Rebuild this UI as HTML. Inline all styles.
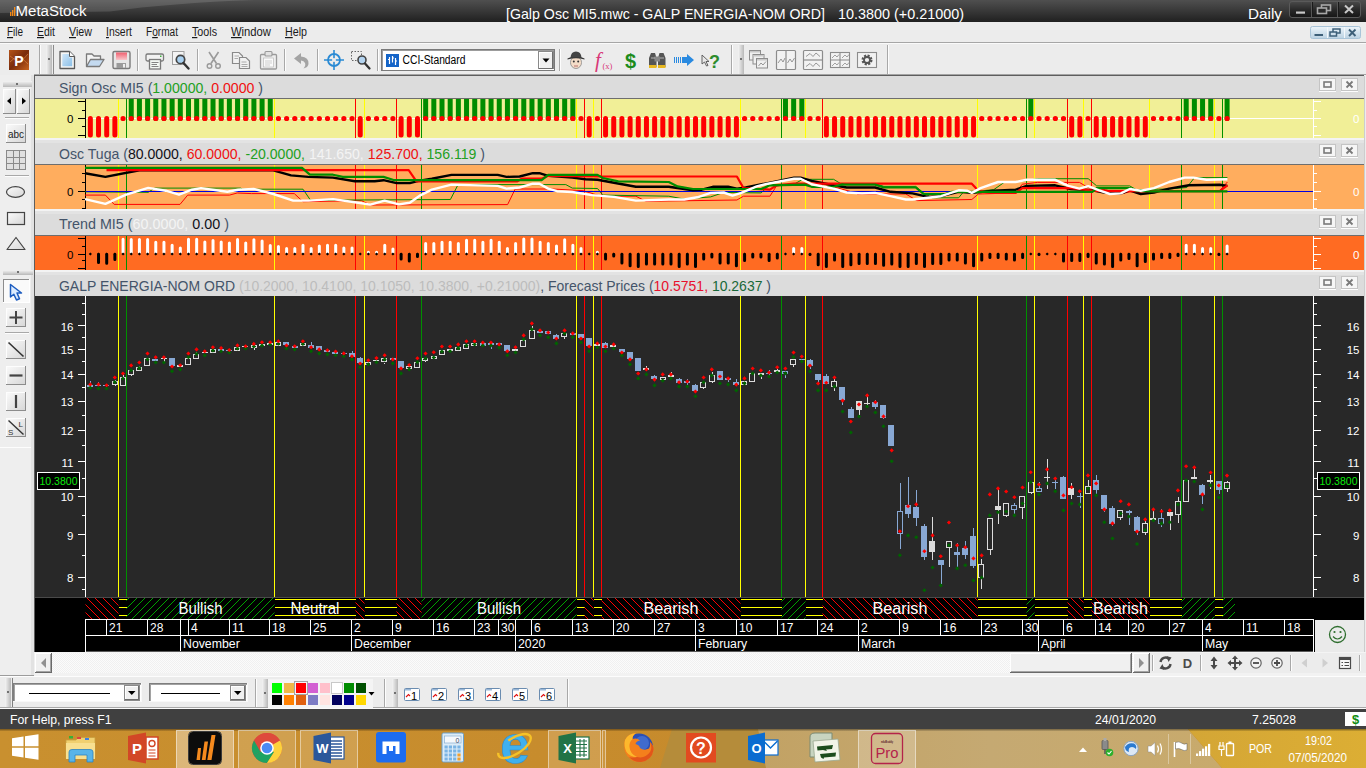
<!DOCTYPE html><html><head><meta charset="utf-8"><title>MetaStock</title><style>html,body{margin:0;padding:0;background:#f0f0f0;overflow:hidden}body{width:1366px;height:768px;font-family:"Liberation Sans",sans-serif}</style></head><body><svg width="1366" height="768" viewBox="0 0 1366 768" style="display:block"><rect width="1366" height="768" fill="#f0f0f0"/><defs><linearGradient id="tb" x1="0" y1="0" x2="0" y2="1"><stop offset="0" stop-color="#4f4f4f"/><stop offset="0.5" stop-color="#383838"/><stop offset="1" stop-color="#202020"/></linearGradient><linearGradient id="tbg" x1="0" y1="0" x2="1" y2="0"><stop offset="0" stop-color="#fff" stop-opacity="0.10"/><stop offset="0.5" stop-color="#000" stop-opacity="0.18"/><stop offset="1" stop-color="#000" stop-opacity="0.25"/></linearGradient><linearGradient id="wb" x1="0" y1="0" x2="0" y2="1"><stop offset="0" stop-color="#4a4a4a"/><stop offset="0.5" stop-color="#2a2a2a"/><stop offset="1" stop-color="#161616"/></linearGradient><linearGradient id="mb" x1="0" y1="0" x2="0" y2="1"><stop offset="0" stop-color="#eef5fa"/><stop offset="0.5" stop-color="#d3e3ee"/><stop offset="1" stop-color="#bcd2e2"/></linearGradient><linearGradient id="grip" x1="0" y1="0" x2="1" y2="0"><stop offset="0" stop-color="#f4f4f4"/><stop offset="1" stop-color="#b8b8b8"/></linearGradient><linearGradient id="gripv" x1="0" y1="0" x2="0" y2="1"><stop offset="0" stop-color="#f4f4f4"/><stop offset="1" stop-color="#b8b8b8"/></linearGradient><linearGradient id="btn" x1="0" y1="0" x2="1" y2="1"><stop offset="0" stop-color="#fbfbfb"/><stop offset="1" stop-color="#d6d6d6"/></linearGradient></defs><rect x="0" y="0" width="1366" height="22" fill="url(#tb)"/><path d="M0 0H255Q170 3 110 11.500L0 13Z" fill="#fff" fill-opacity="0.13"/><rect x="10" y="12" width="1.4" height="4" fill="#f08a1c"/><rect x="12" y="10" width="1.4" height="6" fill="#f08a1c"/><rect x="14" y="7" width="1.4" height="9" fill="#f08a1c"/><text x="15.5" y="15.8" font-family="Liberation Sans, Arial, sans-serif" font-size="15.5" fill="#fff" textLength="71" lengthAdjust="spacingAndGlyphs" xml:space="preserve">MetaStock</text><text x="506" y="19" font-family="Liberation Sans, Arial, sans-serif" font-size="15" fill="#fff" textLength="319" lengthAdjust="spacingAndGlyphs" xml:space="preserve">[Galp Osc MI5.mwc - GALP ENERGIA-NOM ORD]</text><text x="838" y="19" font-family="Liberation Sans, Arial, sans-serif" font-size="15" fill="#fff" textLength="126" lengthAdjust="spacingAndGlyphs" xml:space="preserve">10.3800 (+0.21000)</text><text x="1248" y="19" font-family="Liberation Sans, Arial, sans-serif" font-size="15" fill="#fff" textLength="34" lengthAdjust="spacingAndGlyphs" xml:space="preserve">Daily</text><rect x="1289.5" y="1.5" width="71" height="16" rx="2.5" fill="url(#wb)" stroke="#5a5a5a"/><rect x="1311" y="2" width="1" height="15" fill="#555" shape-rendering="crispEdges"/><rect x="1337" y="2" width="1" height="15" fill="#555" shape-rendering="crispEdges"/><rect x="1312" y="2" width="1" height="15" fill="#1a1a1a" shape-rendering="crispEdges"/><rect x="1338" y="2" width="1" height="15" fill="#1a1a1a" shape-rendering="crispEdges"/><rect x="1296" y="11.5" width="9" height="2.2" fill="#c8c8c8"/><rect x="1321.5" y="5" width="9" height="5.5" fill="none" stroke="#a8a8a8" stroke-width="1.6"/><rect x="1317.5" y="8" width="9" height="5.5" fill="#2a2a2a" stroke="#a8a8a8" stroke-width="1.6"/><path d="M1345 5.5L1353 13M1353 5.5L1345 13" stroke="#c8c8c8" stroke-width="2" fill="none"/><rect x="0" y="22" width="1366" height="21" fill="#ececec"/><rect x="0" y="42" width="1366" height="1" fill="#a6a6a6" shape-rendering="crispEdges"/><rect x="0" y="43" width="1366" height="1" fill="#fafafa" shape-rendering="crispEdges"/><text x="7" y="36" font-family="Liberation Sans, Arial, sans-serif" font-size="12" fill="#1a1a1a" textLength="16" lengthAdjust="spacingAndGlyphs" xml:space="preserve"><tspan text-decoration="underline">F</tspan>ile</text><text x="37" y="36" font-family="Liberation Sans, Arial, sans-serif" font-size="12" fill="#1a1a1a" textLength="18" lengthAdjust="spacingAndGlyphs" xml:space="preserve"><tspan text-decoration="underline">E</tspan>dit</text><text x="69" y="36" font-family="Liberation Sans, Arial, sans-serif" font-size="12" fill="#1a1a1a" textLength="23" lengthAdjust="spacingAndGlyphs" xml:space="preserve"><tspan text-decoration="underline">V</tspan>iew</text><text x="106" y="36" font-family="Liberation Sans, Arial, sans-serif" font-size="12" fill="#1a1a1a" textLength="26" lengthAdjust="spacingAndGlyphs" xml:space="preserve"><tspan text-decoration="underline">I</tspan>nsert</text><text x="146" y="36" font-family="Liberation Sans, Arial, sans-serif" font-size="12" fill="#1a1a1a" textLength="32" lengthAdjust="spacingAndGlyphs" xml:space="preserve">F<tspan text-decoration="underline">o</tspan>rmat</text><text x="192" y="36" font-family="Liberation Sans, Arial, sans-serif" font-size="12" fill="#1a1a1a" textLength="25" lengthAdjust="spacingAndGlyphs" xml:space="preserve"><tspan text-decoration="underline">T</tspan>ools</text><text x="231" y="36" font-family="Liberation Sans, Arial, sans-serif" font-size="12" fill="#1a1a1a" textLength="40" lengthAdjust="spacingAndGlyphs" xml:space="preserve"><tspan text-decoration="underline">W</tspan>indow</text><text x="285" y="36" font-family="Liberation Sans, Arial, sans-serif" font-size="12" fill="#1a1a1a" textLength="22" lengthAdjust="spacingAndGlyphs" xml:space="preserve"><tspan text-decoration="underline">H</tspan>elp</text><rect x="1310.5" y="26.5" width="50" height="12" rx="2" fill="url(#mb)" stroke="#a9c4d8"/><rect x="1326.5" y="27" width="1" height="11" fill="#f4f8fb" shape-rendering="crispEdges"/><rect x="1343.5" y="27" width="1" height="11" fill="#f4f8fb" shape-rendering="crispEdges"/><rect x="1314.5" y="34" width="8.5" height="2" fill="#3d5f78"/><rect x="1333" y="29" width="7" height="4" fill="none" stroke="#3d5f78" stroke-width="1.5"/><rect x="1330" y="32" width="6.5" height="4" fill="#cfe0ec" stroke="#3d5f78" stroke-width="1.5"/><path d="M1349 29.5L1355.5 36M1355.5 29.5L1349 36" stroke="#3d5f78" stroke-width="1.9" fill="none"/><rect x="0" y="44" width="1366" height="31" fill="#ececec"/><rect x="34" y="74" width="1332" height="1" fill="#a4a4a4" shape-rendering="crispEdges"/><defs><linearGradient id="pic" x1="0" y1="0" x2="1" y2="1"><stop offset="0" stop-color="#b4541a"/><stop offset="0.5" stop-color="#7a2c0c"/><stop offset="1" stop-color="#c8641c"/></linearGradient><linearGradient id="pg" x1="0" y1="0" x2="1" y2="1"><stop offset="0" stop-color="#cfe6f8"/><stop offset="1" stop-color="#8cc0e8"/></linearGradient><linearGradient id="sv" x1="0" y1="0" x2="0" y2="1"><stop offset="0" stop-color="#f06070"/><stop offset="1" stop-color="#f8c8cc"/></linearGradient></defs><rect x="9" y="50" width="20" height="20" fill="url(#pic)"/><path d="M10 62Q18 52 28 64M10 56Q20 66 28 54" stroke="#e09050" stroke-width="0.8" fill="none" opacity="0.7"/><text x="19" y="66" font-family="Liberation Sans, Arial, sans-serif" font-size="14" fill="#fff" text-anchor="middle" font-weight="bold" xml:space="preserve">P</text><rect x="39" y="45" width="1" height="29" fill="#a8a8a8" shape-rendering="crispEdges"/><rect x="40" y="45" width="1" height="29" fill="#fdfdfd" shape-rendering="crispEdges"/><rect x="46" y="45" width="6" height="29" fill="url(#grip)"/><rect x="48" y="58" width="2" height="2" fill="#707070" shape-rendering="crispEdges"/><rect x="53" y="45" width="1" height="29" fill="#8a8a8a" shape-rendering="crispEdges"/><path d="M60 51.500H69.500L74.500 56.500V68.500H60Z" fill="#f6f6f4" stroke="#5a5a5a" stroke-width="1.300" stroke-linejoin="round"/><path d="M62.300 54H69V57.500H72.200V66.200H62.300Z" fill="url(#pg)"/><path d="M69.500 51.500V56.500H74.500" fill="#fcfcfc" stroke="#5a5a5a" stroke-width="1"/><path d="M86.500 66.500V54H92L94 56H100.500V59" fill="#f4f4f4" stroke="#7a7a7a" stroke-width="1.3" stroke-linejoin="round"/><path d="M86.500 66.500L90.500 59.500H104L99.500 66.500Z" fill="#c4daf0" stroke="#7a7a7a" stroke-width="1.3" stroke-linejoin="round"/><rect x="113" y="51.500" width="17" height="17" rx="1.5" fill="#e6e6e6" stroke="#7a7a7a" stroke-width="1.4"/><rect x="116" y="52.500" width="11" height="7.500" fill="url(#sv)"/><rect x="116.500" y="63" width="9.500" height="5" fill="#9a9a9a"/><rect x="123" y="64" width="2" height="3.500" fill="#eee"/><rect x="137" y="49" width="1" height="22" fill="#a8a8a8" shape-rendering="crispEdges"/><rect x="138" y="49" width="1" height="22" fill="#fdfdfd" shape-rendering="crispEdges"/><rect x="146" y="54" width="17.500" height="7" rx="1.500" fill="#f2f2f2" stroke="#7a7a7a" stroke-width="1.300"/><rect x="149.500" y="59.500" width="11" height="9.500" fill="#f4faf4" stroke="#7a7a7a" stroke-width="1.300"/><path d="M151.500 62.500H158.500M151.500 64.500H157M151.500 66.500H158.500" stroke="#777" stroke-width="0.9"/><rect x="160" y="55.500" width="1.500" height="1.500" fill="#40b040"/><rect x="172.500" y="51.500" width="11.500" height="13" fill="#f4f4f4" stroke="#a0a0a0" stroke-width="1"/><circle cx="180.500" cy="59.500" r="4.200" fill="#a8d0f0" stroke="#444" stroke-width="1.700"/><path d="M183.500 63L188.500 68.500" stroke="#333" stroke-width="2.400" stroke-linecap="round"/><rect x="197" y="49" width="1" height="22" fill="#a8a8a8" shape-rendering="crispEdges"/><rect x="198" y="49" width="1" height="22" fill="#fdfdfd" shape-rendering="crispEdges"/><path d="M209 52L216.500 63.500M218.500 52L211 63.500" stroke="#9a9a9a" stroke-width="1.600" fill="none"/><circle cx="209.500" cy="66" r="2.300" fill="none" stroke="#9a9a9a" stroke-width="1.400"/><circle cx="218" cy="66" r="2.300" fill="none" stroke="#9a9a9a" stroke-width="1.400"/><path d="M232.500 52.500H239L242.500 56V63.500H232.500Z" fill="#f2f2f2" stroke="#8a8a8a" stroke-width="1.200"/><path d="M239.500 57.500H246L249.500 61V68.500H239.500Z" fill="#f2f2f2" stroke="#8a8a8a" stroke-width="1.200"/><path d="M234.500 56H239M234.500 58.500H238M241.500 62H246.500M241.500 64.500H247.500M241.500 66.500H247.500" stroke="#999" stroke-width="0.8"/><rect x="260.500" y="54.500" width="16" height="14.500" rx="1" fill="#eeeeee" stroke="#9a9a9a" stroke-width="1.300"/><rect x="265" y="51.500" width="7" height="4.500" rx="1" fill="#e2e2e2" stroke="#9a9a9a" stroke-width="1.100"/><rect x="263.500" y="58" width="10" height="9" fill="#fafafa" stroke="#bbb" stroke-width="0.700"/><path d="M265 61H272M265 63H272M265 65H270" stroke="#bbb" stroke-width="0.700"/><rect x="284" y="49" width="1" height="22" fill="#a8a8a8" shape-rendering="crispEdges"/><rect x="285" y="49" width="1" height="22" fill="#fdfdfd" shape-rendering="crispEdges"/><path d="M294 58.500L301 53V56.500Q309 57 308.500 64Q308 67.500 303.500 68.500Q306 65.500 305 63Q304 60.500 301 60.500V64Z" fill="#a4a4a4"/><rect x="317" y="49" width="1" height="22" fill="#a8a8a8" shape-rendering="crispEdges"/><rect x="318" y="49" width="1" height="22" fill="#fdfdfd" shape-rendering="crispEdges"/><circle cx="334" cy="60" r="6" fill="none" stroke="#2a8ad4" stroke-width="1.800"/><path d="M324 60H344M334 50V70" stroke="#2a8ad4" stroke-width="1.600"/><circle cx="334" cy="60" r="2" fill="#ececec"/><rect x="351.500" y="51.500" width="10" height="9" fill="none" stroke="#666" stroke-width="1" stroke-dasharray="1.500 1.500"/><circle cx="362" cy="60" r="4" fill="#b4d4f0" stroke="#444" stroke-width="1.600"/><path d="M365 63.500L369.500 68.500" stroke="#333" stroke-width="2.300" stroke-linecap="round"/><rect x="377" y="49" width="1" height="22" fill="#a8a8a8" shape-rendering="crispEdges"/><rect x="378" y="49" width="1" height="22" fill="#fdfdfd" shape-rendering="crispEdges"/><rect x="381.500" y="49.500" width="173" height="21" fill="#fff" stroke="#7a7a7a" shape-rendering="crispEdges"/><rect x="382" y="50" width="172" height="1" fill="#9c9c9c" shape-rendering="crispEdges"/><rect x="382" y="50" width="1" height="20" fill="#9c9c9c" shape-rendering="crispEdges"/><rect x="538.500" y="51.500" width="15" height="17" fill="#f0f0f0" stroke="#8a8a8a" shape-rendering="crispEdges"/><rect x="539" y="52" width="14" height="1" fill="#fff" shape-rendering="crispEdges"/><rect x="539" y="52" width="1" height="16" fill="#fff" shape-rendering="crispEdges"/><rect x="552" y="52" width="1" height="16" fill="#6e6e6e" shape-rendering="crispEdges"/><rect x="539" y="68" width="14" height="1" fill="#6e6e6e" shape-rendering="crispEdges"/><path d="M542.500 58.500H549.500L546 62.500Z" fill="#000"/><rect x="386" y="54" width="13" height="13" fill="#1464c8"/><path d="M389.500 57V64M392.500 56V62.500M395.500 58V65M389.500 59.500H388M392.500 58H394M395.500 61H397" stroke="#fff" stroke-width="1.200"/><text x="402.5" y="64" font-family="Liberation Sans, Arial, sans-serif" font-size="12" fill="#000" textLength="63" lengthAdjust="spacingAndGlyphs" xml:space="preserve">CCI-Standard</text><rect x="559" y="49" width="1" height="22" fill="#a8a8a8" shape-rendering="crispEdges"/><rect x="560" y="49" width="1" height="22" fill="#fdfdfd" shape-rendering="crispEdges"/><ellipse cx="576" cy="62.500" rx="5.500" ry="6" fill="#f4ddc8" stroke="#888" stroke-width="0.8"/><path d="M567.500 58.500Q576 54 584.500 58.500L584.500 59.500Q576 57 567.500 59.500Z" fill="#333"/><path d="M570.500 57.500Q571 51.500 576 51.500Q581 51.500 581.500 57.500Z" fill="#444"/><circle cx="573.800" cy="61.500" r="1" fill="#333"/><circle cx="578.200" cy="61.500" r="1" fill="#333"/><path d="M574 66H578" stroke="#a55" stroke-width="0.8"/><text x="595" y="67" font-family="Liberation Serif, serif" font-style="italic" font-size="21" fill="#d83878">f</text><text x="602.500" y="69" font-family="Liberation Serif, serif" font-size="8.500" fill="#d83878">(x)</text><text x="630.5" y="68" font-family="Liberation Sans, Arial, sans-serif" font-size="20" fill="#1c8c1c" text-anchor="middle" font-weight="bold" xml:space="preserve">$</text><path d="M649 67V58L651 53H655L656.500 58V67ZM658 67V58L659.500 53H663.500L665.500 58V67Z" fill="#555"/><rect x="654.500" y="56.500" width="5.500" height="5" fill="#888"/><rect x="649" y="65" width="7.500" height="3" fill="#e8b820"/><rect x="658" y="65" width="7.500" height="3" fill="#e8b820"/><path d="M651 58H655M660 58H664" stroke="#ccc" stroke-width="0.8"/><path d="M674.500 57V63M676.500 57V63M678.500 57V63M680.500 57V63" stroke="#2a8ae0" stroke-width="1"/><path d="M682 57H687V54L694 60L687 66V63H682Z" fill="#2a8ae0"/><path d="M702 55L702 64L704.500 62L706.500 66L708 65.500L706 61.500L709 61.500Z" fill="#e8e8e8" stroke="#555" stroke-width="0.9"/><text x="714.5" y="68" font-family="Liberation Sans, Arial, sans-serif" font-size="18" fill="#2c8c2c" text-anchor="middle" font-weight="bold" xml:space="preserve">?</text><rect x="731" y="45" width="1" height="29" fill="#a8a8a8" shape-rendering="crispEdges"/><rect x="732" y="45" width="1" height="29" fill="#fdfdfd" shape-rendering="crispEdges"/><rect x="738" y="45" width="6" height="29" fill="url(#grip)"/><rect x="740" y="58" width="2" height="2" fill="#707070" shape-rendering="crispEdges"/><rect x="749.5" y="50.5" width="11" height="9.500" fill="#f0f0f0" stroke="#8c8c8c" stroke-width="1"/><rect x="750.0" y="51.0" width="10" height="1.500" fill="#c8c8c8"/><rect x="753" y="54.5" width="11" height="9.500" fill="#f0f0f0" stroke="#8c8c8c" stroke-width="1"/><rect x="753.5" y="55.0" width="10" height="1.500" fill="#c8c8c8"/><rect x="756.5" y="58.5" width="11" height="9.500" fill="#f0f0f0" stroke="#8c8c8c" stroke-width="1"/><rect x="757.0" y="59.0" width="10" height="1.500" fill="#c8c8c8"/><path d="M758.500 66L761 63L763 65L766 61.500" stroke="#8c8c8c" stroke-width="0.9" fill="none"/><rect x="776.500" y="50.500" width="19" height="19" rx="1" fill="#f2f2f2" stroke="#8c8c8c" stroke-width="1.200"/><path d="M786 50.500V69.500" stroke="#8c8c8c" stroke-width="1.200"/><path d="M778 63L781 59L783 62L785 58M787.500 63L790 59L792 62L794.500 58" stroke="#8c8c8c" stroke-width="0.9" fill="none"/><rect x="803.500" y="50.500" width="19" height="19" rx="1" fill="#f2f2f2" stroke="#8c8c8c" stroke-width="1.200"/><path d="M803.500 60H822.500" stroke="#8c8c8c" stroke-width="1.200"/><path d="M806 56.500L810 53.500L813 56.500L816 53L820 56.500M806 66.500L810 63.500L813 66.500L816 63L820 66.500" stroke="#8c8c8c" stroke-width="0.9" fill="none"/><rect x="830.500" y="52.500" width="19" height="15" fill="#f2f2f2" stroke="#8c8c8c" stroke-width="1.100"/><path d="M840 52.500V67.500M830.500 60H849.500" stroke="#8c8c8c" stroke-width="1.100"/><path d="M832 58L835 55L837 57L839 54.500M842 58L845 55L847 57L849 54.500M832 66L835 63L837 65L839 62.500M842 66L845 63L847 65L849 62.500" stroke="#8c8c8c" stroke-width="0.8" fill="none"/><rect x="857.500" y="52.500" width="19" height="15" fill="#f2f2f2" stroke="#8c8c8c" stroke-width="1.100"/><circle cx="867" cy="60" r="4.200" fill="none" stroke="#555" stroke-width="2.600" stroke-dasharray="2 1.300"/><circle cx="867" cy="60" r="3" fill="none" stroke="#555" stroke-width="1.800"/><rect x="887" y="45" width="1" height="29" fill="#a8a8a8" shape-rendering="crispEdges"/><rect x="888" y="45" width="1" height="29" fill="#fdfdfd" shape-rendering="crispEdges"/><rect x="0" y="75" width="34" height="600" fill="#eeeeee"/><rect x="31" y="75" width="3" height="600" fill="#e2e2e2"/><rect x="0" y="675" width="34" height="1" fill="#9c9c9c" shape-rendering="crispEdges"/><rect x="3" y="81" width="29" height="6" fill="url(#gripv)"/><rect x="16" y="83" width="2" height="2" fill="#707070" shape-rendering="crispEdges"/><rect x="3" y="89" width="13" height="25" fill="url(#btn)"/><rect x="3" y="89" width="13" height="1" fill="#fdfdfd" shape-rendering="crispEdges"/><rect x="3" y="89" width="1" height="25" fill="#fdfdfd" shape-rendering="crispEdges"/><rect x="15" y="89" width="1" height="25" fill="#8c8c8c" shape-rendering="crispEdges"/><rect x="3" y="113" width="13" height="1" fill="#8c8c8c" shape-rendering="crispEdges"/><rect x="17" y="89" width="13" height="25" fill="url(#btn)"/><rect x="17" y="89" width="13" height="1" fill="#fdfdfd" shape-rendering="crispEdges"/><rect x="17" y="89" width="1" height="25" fill="#fdfdfd" shape-rendering="crispEdges"/><rect x="29" y="89" width="1" height="25" fill="#8c8c8c" shape-rendering="crispEdges"/><rect x="17" y="113" width="13" height="1" fill="#8c8c8c" shape-rendering="crispEdges"/><path d="M11 97.500V104.500L7 101Z" fill="#000"/><path d="M22 97.500V104.500L26 101Z" fill="#000"/><rect x="5" y="117" width="24" height="1" fill="#a8a8a8" shape-rendering="crispEdges"/><rect x="5" y="118" width="24" height="1" fill="#fdfdfd" shape-rendering="crispEdges"/><rect x="6" y="124" width="20" height="19" fill="url(#btn)"/><rect x="6" y="124" width="20" height="1" fill="#fdfdfd" shape-rendering="crispEdges"/><rect x="6" y="124" width="1" height="19" fill="#fdfdfd" shape-rendering="crispEdges"/><rect x="25" y="124" width="1" height="19" fill="#8c8c8c" shape-rendering="crispEdges"/><rect x="6" y="142" width="20" height="1" fill="#8c8c8c" shape-rendering="crispEdges"/><text x="16" y="138" font-family="Liberation Sans, Arial, sans-serif" font-size="11.5" fill="#222" text-anchor="middle" textLength="16" lengthAdjust="spacingAndGlyphs" xml:space="preserve">abc</text><rect x="6" y="150" width="20" height="20" fill="#e0e0e0"/><path d="M6.500 150.500H25.500V169.500H6.500ZM13 150.500V169.500M19.500 150.500V169.500M6.500 157H25.500M6.500 163.500H25.500" stroke="#8a8a8a" stroke-width="1" fill="none" shape-rendering="crispEdges"/><rect x="5" y="175" width="24" height="1" fill="#a8a8a8" shape-rendering="crispEdges"/><rect x="5" y="176" width="24" height="1" fill="#fdfdfd" shape-rendering="crispEdges"/><ellipse cx="15.500" cy="192" rx="9" ry="5.300" fill="url(#btn)" stroke="#444" stroke-width="1.200"/><rect x="7.500" y="212.500" width="17" height="12" fill="url(#btn)" stroke="#444" stroke-width="1.200"/><path d="M16 237.500L25 249.500H7Z" fill="url(#btn)" stroke="#444" stroke-width="1.200" stroke-linejoin="round"/><rect x="3" y="270" width="30" height="5" fill="url(#gripv)"/><rect x="17" y="271" width="2" height="2" fill="#707070" shape-rendering="crispEdges"/><rect x="3" y="279" width="27" height="24" fill="#fafafa"/><rect x="3" y="279" width="27" height="1" fill="#8c8c8c" shape-rendering="crispEdges"/><rect x="3" y="279" width="1" height="24" fill="#8c8c8c" shape-rendering="crispEdges"/><rect x="29" y="279" width="1" height="24" fill="#fff" shape-rendering="crispEdges"/><rect x="3" y="302" width="27" height="1" fill="#fff" shape-rendering="crispEdges"/><path d="M10.500 284.500L10.500 297L13.800 294.200L16.500 300L19.500 298.700L17 293L21.500 293Z" fill="#dcecff" stroke="#1c5cc0" stroke-width="1.500" stroke-linejoin="round"/><rect x="6" y="308" width="20" height="19" fill="url(#btn)"/><rect x="6" y="308" width="20" height="1" fill="#fdfdfd" shape-rendering="crispEdges"/><rect x="6" y="308" width="1" height="19" fill="#fdfdfd" shape-rendering="crispEdges"/><rect x="25" y="308" width="1" height="19" fill="#8c8c8c" shape-rendering="crispEdges"/><rect x="6" y="326" width="20" height="1" fill="#8c8c8c" shape-rendering="crispEdges"/><path d="M9.500 317.500H22.500M16 311V324" stroke="#444" stroke-width="2"/><rect x="5" y="332" width="24" height="1" fill="#a8a8a8" shape-rendering="crispEdges"/><rect x="5" y="333" width="24" height="1" fill="#fdfdfd" shape-rendering="crispEdges"/><rect x="6" y="340" width="20" height="19" fill="url(#btn)"/><rect x="6" y="340" width="20" height="1" fill="#fdfdfd" shape-rendering="crispEdges"/><rect x="6" y="340" width="1" height="19" fill="#fdfdfd" shape-rendering="crispEdges"/><rect x="25" y="340" width="1" height="19" fill="#8c8c8c" shape-rendering="crispEdges"/><rect x="6" y="358" width="20" height="1" fill="#8c8c8c" shape-rendering="crispEdges"/><path d="M8.500 342.500L23.500 356.500" stroke="#333" stroke-width="1.600"/><rect x="6" y="366" width="20" height="19" fill="url(#btn)"/><rect x="6" y="366" width="20" height="1" fill="#fdfdfd" shape-rendering="crispEdges"/><rect x="6" y="366" width="1" height="19" fill="#fdfdfd" shape-rendering="crispEdges"/><rect x="25" y="366" width="1" height="19" fill="#8c8c8c" shape-rendering="crispEdges"/><rect x="6" y="384" width="20" height="1" fill="#8c8c8c" shape-rendering="crispEdges"/><path d="M9.500 375.500H22.500" stroke="#444" stroke-width="2.200"/><rect x="6" y="392" width="20" height="19" fill="url(#btn)"/><rect x="6" y="392" width="20" height="1" fill="#fdfdfd" shape-rendering="crispEdges"/><rect x="6" y="392" width="1" height="19" fill="#fdfdfd" shape-rendering="crispEdges"/><rect x="25" y="392" width="1" height="19" fill="#8c8c8c" shape-rendering="crispEdges"/><rect x="6" y="410" width="20" height="1" fill="#8c8c8c" shape-rendering="crispEdges"/><path d="M16 395V408" stroke="#444" stroke-width="2.200"/><rect x="6" y="418" width="20" height="19" fill="url(#btn)"/><rect x="6" y="418" width="20" height="1" fill="#fdfdfd" shape-rendering="crispEdges"/><rect x="6" y="418" width="1" height="19" fill="#fdfdfd" shape-rendering="crispEdges"/><rect x="25" y="418" width="1" height="19" fill="#8c8c8c" shape-rendering="crispEdges"/><rect x="6" y="436" width="20" height="1" fill="#8c8c8c" shape-rendering="crispEdges"/><path d="M8.500 420.500L23.500 434.500" stroke="#333" stroke-width="1.400"/><text x="8" y="435" font-family="Liberation Sans, Arial, sans-serif" font-size="8" fill="#333" xml:space="preserve">S</text><text x="18.5" y="427" font-family="Liberation Sans, Arial, sans-serif" font-size="8" fill="#333" xml:space="preserve">L</text><rect x="0" y="447" width="31" height="1" fill="#fdfdfd" shape-rendering="crispEdges"/><defs>
<pattern id="hr" width="8" height="8" patternUnits="userSpaceOnUse" x="0" y="599"><path d="M-1 -1L9 9M-1 -9L17 9M-9 -1L9 17" stroke="#ff0000" stroke-width="1" shape-rendering="crispEdges"/></pattern>
<pattern id="hg" width="8" height="8" patternUnits="userSpaceOnUse" x="0" y="599"><path d="M-1 9L9 -1M-1 17L17 -1M-9 9L9 -9" stroke="#00a000" stroke-width="1" shape-rendering="crispEdges"/></pattern>
</defs><rect x="34" y="75" width="1330" height="578" fill="#5e5e5e"/><rect x="1364" y="76" width="1" height="577" fill="#cdcdcd"/><rect x="1365" y="76" width="1" height="577" fill="#ececec"/><rect x="35" y="76" width="1329" height="576" fill="#dcdcdc"/><rect x="35" y="99" width="1329" height="39" fill="#f1ef97"/><rect x="35" y="138" width="1329" height="2" fill="#f3f3f3"/><rect x="35" y="140" width="1329" height="3" fill="#e3e3e3"/><g shape-rendering="crispEdges"><rect x="85" y="99" width="1" height="39" fill="#000"/><rect x="78" y="101" width="7" height="1" fill="#000"/><rect x="78" y="118" width="7" height="1" fill="#000"/><rect x="78" y="135" width="7" height="1" fill="#000"/><rect x="82" y="110" width="3" height="1" fill="#000"/><rect x="82" y="126" width="3" height="1" fill="#000"/></g><text x="67" y="123" font-family="Liberation Sans, Arial, sans-serif" font-size="11.5" fill="#000">0</text><rect x="86" y="118" width="1228" height="1" fill="#fff" shape-rendering="crispEdges"/><g shape-rendering="crispEdges" stroke-width="1"><line x1="118.5" y1="99" x2="118.5" y2="138" stroke="#ffff00"/><line x1="126.5" y1="99" x2="126.5" y2="138" stroke="#009000"/><line x1="274.5" y1="99" x2="274.5" y2="138" stroke="#ffff00"/><line x1="355.5" y1="99" x2="355.5" y2="138" stroke="#ff0000"/><line x1="364.5" y1="99" x2="364.5" y2="138" stroke="#ffff00"/><line x1="396.5" y1="99" x2="396.5" y2="138" stroke="#ff0000"/><line x1="421.5" y1="99" x2="421.5" y2="138" stroke="#009000"/><line x1="576.5" y1="99" x2="576.5" y2="138" stroke="#ffff00"/><line x1="584.5" y1="99" x2="584.5" y2="138" stroke="#ff0000"/><line x1="593.5" y1="99" x2="593.5" y2="138" stroke="#ffff00"/><line x1="601.5" y1="99" x2="601.5" y2="138" stroke="#ff0000"/><line x1="740.5" y1="99" x2="740.5" y2="138" stroke="#ffff00"/><line x1="781.5" y1="99" x2="781.5" y2="138" stroke="#009000"/><line x1="805.5" y1="99" x2="805.5" y2="138" stroke="#ffff00"/><line x1="822.5" y1="99" x2="822.5" y2="138" stroke="#ff0000"/><line x1="977.5" y1="99" x2="977.5" y2="138" stroke="#ffff00"/><line x1="1026.5" y1="99" x2="1026.5" y2="138" stroke="#009000"/><line x1="1034.5" y1="99" x2="1034.5" y2="138" stroke="#ffff00"/><line x1="1067.5" y1="99" x2="1067.5" y2="138" stroke="#ff0000"/><line x1="1083.5" y1="99" x2="1083.5" y2="138" stroke="#ffff00"/><line x1="1091.5" y1="99" x2="1091.5" y2="138" stroke="#ff0000"/><line x1="1149.5" y1="99" x2="1149.5" y2="138" stroke="#ffff00"/><line x1="1181.5" y1="99" x2="1181.5" y2="138" stroke="#009000"/><line x1="1214.5" y1="99" x2="1214.5" y2="138" stroke="#ffff00"/><line x1="1222.5" y1="99" x2="1222.5" y2="138" stroke="#009000"/></g><path d="M131.24 118.5V96M139.42 118.5V96M147.6 118.5V96M155.77 118.5V96M163.95 118.5V96M172.13 118.5V96M180.31 118.5V96M188.49 118.5V96M196.66 118.5V96M204.84 118.5V96M213.02 118.5V96M221.2 118.5V96M229.38 118.5V96M237.55 118.5V96M245.73 118.5V96M253.91 118.5V96M262.09 118.5V96M270.27 118.5V96M425.65 118.5V96M433.83 118.5V96M442 118.5V96M450.18 118.5V96M458.36 118.5V96M466.54 118.5V96M474.72 118.5V96M482.89 118.5V96M491.07 118.5V96M499.25 118.5V96M507.43 118.5V96M515.61 118.5V96M523.78 118.5V96M531.96 118.5V96M540.14 118.5V96M548.32 118.5V96M556.5 118.5V96M564.67 118.5V96M572.85 118.5V96M785.48 118.5V96M793.66 118.5V96M801.84 118.5V96M1030.82 118.5V96M1186.2 118.5V96M1194.38 118.5V96M1202.56 118.5V96M1210.74 118.5V96M1227.09 118.5V96" stroke="#008c00" stroke-width="5" stroke-linecap="round" fill="none"/><path d="M90.35 118.5V135M98.53 118.5V135M106.71 118.5V135M114.88 118.5V135M360.22 118.5V135M401.11 118.5V135M409.29 118.5V135M417.47 118.5V135M589.21 118.5V135M605.56 118.5V135M613.74 118.5V135M621.92 118.5V135M630.1 118.5V135M638.28 118.5V135M646.45 118.5V135M654.63 118.5V135M662.81 118.5V135M670.99 118.5V135M679.17 118.5V135M687.34 118.5V135M695.52 118.5V135M703.7 118.5V135M711.88 118.5V135M720.06 118.5V135M728.23 118.5V135M736.41 118.5V135M826.37 118.5V135M834.55 118.5V135M842.73 118.5V135M850.9 118.5V135M859.08 118.5V135M867.26 118.5V135M875.44 118.5V135M883.62 118.5V135M891.79 118.5V135M899.97 118.5V135M908.15 118.5V135M916.33 118.5V135M924.51 118.5V135M932.68 118.5V135M940.86 118.5V135M949.04 118.5V135M957.22 118.5V135M965.4 118.5V135M973.57 118.5V135M1071.71 118.5V135M1079.89 118.5V135M1096.24 118.5V135M1104.42 118.5V135M1112.6 118.5V135M1120.78 118.5V135M1128.96 118.5V135M1137.13 118.5V135M1145.31 118.5V135" stroke="#ff0000" stroke-width="5" stroke-linecap="round" fill="none"/><g fill="#ff0000"><circle cx="123.06" cy="118.5" r="2.6"/><circle cx="131.24" cy="118.5" r="2.6"/><circle cx="139.42" cy="118.5" r="2.6"/><circle cx="147.6" cy="118.5" r="2.6"/><circle cx="155.77" cy="118.5" r="2.6"/><circle cx="163.95" cy="118.5" r="2.6"/><circle cx="172.13" cy="118.5" r="2.6"/><circle cx="180.31" cy="118.5" r="2.6"/><circle cx="188.49" cy="118.5" r="2.6"/><circle cx="196.66" cy="118.5" r="2.6"/><circle cx="204.84" cy="118.5" r="2.6"/><circle cx="213.02" cy="118.5" r="2.6"/><circle cx="221.2" cy="118.5" r="2.6"/><circle cx="229.38" cy="118.5" r="2.6"/><circle cx="237.55" cy="118.5" r="2.6"/><circle cx="245.73" cy="118.5" r="2.6"/><circle cx="253.91" cy="118.5" r="2.6"/><circle cx="262.09" cy="118.5" r="2.6"/><circle cx="270.27" cy="118.5" r="2.6"/><circle cx="278.44" cy="118.5" r="2.6"/><circle cx="286.62" cy="118.5" r="2.6"/><circle cx="294.8" cy="118.5" r="2.6"/><circle cx="302.98" cy="118.5" r="2.6"/><circle cx="311.16" cy="118.5" r="2.6"/><circle cx="319.33" cy="118.5" r="2.6"/><circle cx="327.51" cy="118.5" r="2.6"/><circle cx="335.69" cy="118.5" r="2.6"/><circle cx="343.87" cy="118.5" r="2.6"/><circle cx="352.05" cy="118.5" r="2.6"/><circle cx="368.4" cy="118.5" r="2.6"/><circle cx="376.58" cy="118.5" r="2.6"/><circle cx="384.76" cy="118.5" r="2.6"/><circle cx="392.94" cy="118.5" r="2.6"/><circle cx="425.65" cy="118.5" r="2.6"/><circle cx="433.83" cy="118.5" r="2.6"/><circle cx="442" cy="118.5" r="2.6"/><circle cx="450.18" cy="118.5" r="2.6"/><circle cx="458.36" cy="118.5" r="2.6"/><circle cx="466.54" cy="118.5" r="2.6"/><circle cx="474.72" cy="118.5" r="2.6"/><circle cx="482.89" cy="118.5" r="2.6"/><circle cx="491.07" cy="118.5" r="2.6"/><circle cx="499.25" cy="118.5" r="2.6"/><circle cx="507.43" cy="118.5" r="2.6"/><circle cx="515.61" cy="118.5" r="2.6"/><circle cx="523.78" cy="118.5" r="2.6"/><circle cx="531.96" cy="118.5" r="2.6"/><circle cx="540.14" cy="118.5" r="2.6"/><circle cx="548.32" cy="118.5" r="2.6"/><circle cx="556.5" cy="118.5" r="2.6"/><circle cx="564.67" cy="118.5" r="2.6"/><circle cx="572.85" cy="118.5" r="2.6"/><circle cx="581.03" cy="118.5" r="2.6"/><circle cx="597.39" cy="118.5" r="2.6"/><circle cx="744.59" cy="118.5" r="2.6"/><circle cx="752.77" cy="118.5" r="2.6"/><circle cx="760.95" cy="118.5" r="2.6"/><circle cx="769.12" cy="118.5" r="2.6"/><circle cx="777.3" cy="118.5" r="2.6"/><circle cx="785.48" cy="118.5" r="2.6"/><circle cx="793.66" cy="118.5" r="2.6"/><circle cx="801.84" cy="118.5" r="2.6"/><circle cx="810.01" cy="118.5" r="2.6"/><circle cx="818.19" cy="118.5" r="2.6"/><circle cx="981.75" cy="118.5" r="2.6"/><circle cx="989.93" cy="118.5" r="2.6"/><circle cx="998.11" cy="118.5" r="2.6"/><circle cx="1006.29" cy="118.5" r="2.6"/><circle cx="1014.46" cy="118.5" r="2.6"/><circle cx="1022.64" cy="118.5" r="2.6"/><circle cx="1030.82" cy="118.5" r="2.6"/><circle cx="1039" cy="118.5" r="2.6"/><circle cx="1047.18" cy="118.5" r="2.6"/><circle cx="1055.35" cy="118.5" r="2.6"/><circle cx="1063.53" cy="118.5" r="2.6"/><circle cx="1088.07" cy="118.5" r="2.6"/><circle cx="1153.49" cy="118.5" r="2.6"/><circle cx="1161.67" cy="118.5" r="2.6"/><circle cx="1169.85" cy="118.5" r="2.6"/><circle cx="1178.02" cy="118.5" r="2.6"/><circle cx="1186.2" cy="118.5" r="2.6"/><circle cx="1194.38" cy="118.5" r="2.6"/><circle cx="1202.56" cy="118.5" r="2.6"/><circle cx="1210.74" cy="118.5" r="2.6"/><circle cx="1218.91" cy="118.5" r="2.6"/><circle cx="1227.09" cy="118.5" r="2.6"/></g><g shape-rendering="crispEdges"><rect x="1313" y="99" width="1" height="39" fill="#fff"/><rect x="1314" y="101" width="7" height="1" fill="#fff"/><rect x="1314" y="118" width="7" height="1" fill="#fff"/><rect x="1314" y="135" width="7" height="1" fill="#fff"/><rect x="1314" y="110" width="3" height="1" fill="#fff"/><rect x="1314" y="126" width="3" height="1" fill="#fff"/></g><text x="1353" y="123" font-family="Liberation Sans, Arial, sans-serif" font-size="11.5" fill="#fff">0</text><rect x="35" y="76" width="1329" height="22" fill="#dcdcdc"/><rect x="35" y="98" width="1329" height="1" fill="#6e6e6e"/><text x="59" y="93" font-family="Liberation Sans, Arial, sans-serif" font-size="14.5" textLength="204" lengthAdjust="spacingAndGlyphs" xml:space="preserve"><tspan fill="#44546a">Sign Osc MI5 (</tspan><tspan fill="#22a022">1.00000,</tspan><tspan fill="#000"> </tspan><tspan fill="#f01010">0.0000</tspan><tspan fill="#44546a"> )</tspan></text><rect x="1319.5" y="78.5" width="16" height="12" fill="#f6f6f6" stroke="#c4c4c4" shape-rendering="crispEdges"/><rect x="1319" y="91" width="17" height="1" fill="#fdfdfd"/><rect x="1324" y="82" width="7" height="5" fill="none" stroke="#7a7a7a" stroke-width="1.6"/><rect x="1341.5" y="78.5" width="16" height="12" fill="#f6f6f6" stroke="#c4c4c4" shape-rendering="crispEdges"/><rect x="1341" y="91" width="17" height="1" fill="#fdfdfd"/><path d="M1346.5 81.5L1352.5 87.5M1352.5 81.5L1346.5 87.5" stroke="#7a7a7a" stroke-width="1.8" fill="none"/><rect x="35" y="143" width="1329" height="21" fill="#dcdcdc"/><rect x="35" y="164" width="1329" height="1" fill="#6e6e6e"/><text x="59" y="158.7" font-family="Liberation Sans, Arial, sans-serif" font-size="14.5" textLength="426" lengthAdjust="spacingAndGlyphs" xml:space="preserve"><tspan fill="#44546a">Osc Tuga (</tspan><tspan fill="#101018">80.0000,</tspan><tspan fill="#000"> </tspan><tspan fill="#f01010">60.0000,</tspan><tspan fill="#000"> </tspan><tspan fill="#22a022">-20.0000,</tspan><tspan fill="#000"> </tspan><tspan fill="#f4f4f4">141.650,</tspan><tspan fill="#000"> </tspan><tspan fill="#f01010">125.700,</tspan><tspan fill="#000"> </tspan><tspan fill="#22a022">156.119</tspan><tspan fill="#44546a"> )</tspan></text><rect x="1319.5" y="144.5" width="16" height="12" fill="#f6f6f6" stroke="#c4c4c4" shape-rendering="crispEdges"/><rect x="1319" y="157" width="17" height="1" fill="#fdfdfd"/><rect x="1324" y="148" width="7" height="5" fill="none" stroke="#7a7a7a" stroke-width="1.6"/><rect x="1341.5" y="144.5" width="16" height="12" fill="#f6f6f6" stroke="#c4c4c4" shape-rendering="crispEdges"/><rect x="1341" y="157" width="17" height="1" fill="#fdfdfd"/><path d="M1346.5 147.5L1352.5 153.5M1352.5 147.5L1346.5 153.5" stroke="#7a7a7a" stroke-width="1.8" fill="none"/><rect x="35" y="165" width="1329" height="44" fill="#ffad5e"/><rect x="35" y="209" width="1329" height="2" fill="#f3f3f3"/><rect x="35" y="211" width="1329" height="3" fill="#e3e3e3"/><g shape-rendering="crispEdges"><rect x="85" y="165" width="1" height="44" fill="#000"/><rect x="78" y="191" width="7" height="1" fill="#000"/><rect x="82" y="173" width="3" height="1" fill="#000"/><rect x="82" y="182" width="3" height="1" fill="#000"/><rect x="82" y="199" width="3" height="1" fill="#000"/><rect x="82" y="208" width="3" height="1" fill="#000"/></g><text x="67" y="196" font-family="Liberation Sans, Arial, sans-serif" font-size="11.5" fill="#000">0</text><g shape-rendering="crispEdges" stroke-width="1"><line x1="118.5" y1="165" x2="118.5" y2="209" stroke="#ffff00"/><line x1="126.5" y1="165" x2="126.5" y2="209" stroke="#009000"/><line x1="274.5" y1="165" x2="274.5" y2="209" stroke="#ffff00"/><line x1="355.5" y1="165" x2="355.5" y2="209" stroke="#ff0000"/><line x1="364.5" y1="165" x2="364.5" y2="209" stroke="#ffff00"/><line x1="396.5" y1="165" x2="396.5" y2="209" stroke="#ff0000"/><line x1="421.5" y1="165" x2="421.5" y2="209" stroke="#009000"/><line x1="576.5" y1="165" x2="576.5" y2="209" stroke="#ffff00"/><line x1="584.5" y1="165" x2="584.5" y2="209" stroke="#ff0000"/><line x1="593.5" y1="165" x2="593.5" y2="209" stroke="#ffff00"/><line x1="601.5" y1="165" x2="601.5" y2="209" stroke="#ff0000"/><line x1="740.5" y1="165" x2="740.5" y2="209" stroke="#ffff00"/><line x1="781.5" y1="165" x2="781.5" y2="209" stroke="#009000"/><line x1="805.5" y1="165" x2="805.5" y2="209" stroke="#ffff00"/><line x1="822.5" y1="165" x2="822.5" y2="209" stroke="#ff0000"/><line x1="977.5" y1="165" x2="977.5" y2="209" stroke="#ffff00"/><line x1="1026.5" y1="165" x2="1026.5" y2="209" stroke="#009000"/><line x1="1034.5" y1="165" x2="1034.5" y2="209" stroke="#ffff00"/><line x1="1067.5" y1="165" x2="1067.5" y2="209" stroke="#ff0000"/><line x1="1083.5" y1="165" x2="1083.5" y2="209" stroke="#ffff00"/><line x1="1091.5" y1="165" x2="1091.5" y2="209" stroke="#ff0000"/><line x1="1149.5" y1="165" x2="1149.5" y2="209" stroke="#ffff00"/><line x1="1181.5" y1="165" x2="1181.5" y2="209" stroke="#009000"/><line x1="1214.5" y1="165" x2="1214.5" y2="209" stroke="#ffff00"/><line x1="1222.5" y1="165" x2="1222.5" y2="209" stroke="#009000"/></g><path d="M85 195.1L105.4 195.1L114.2 204.4L180 204.4L187.7 195.1L229.5 195.1L237.2 193L251.4 193.6L294.3 193.6L303 201.7L361.5 200.6L370.3 205L507.6 204.6L515.2 189L552.6 189L583.2 190.7L600.7 196.2L635.9 196.2L645.8 201.3L736.9 200L743.5 196.2L769.9 196.2L776.5 185.9L794 183.7L822.6 183.7L855.5 192.9L857.6 194L905.9 194L916.9 200.6L971.8 199.5L978.4 194L1015.7 192.9L1022.3 184.2L1037.7 182.4L1079.4 182.4L1088 187.5L1105.5 189.7L1120.9 194L1129.7 191.8L1219.7 190.7L1227.4 182" stroke="#ff0000" stroke-width="1" fill="none" stroke-linejoin="round"/><path d="M85 191.8L148.2 192.3L154.8 188.1L240.5 188.1L242.7 189.2L303 189.2L310.5 200.2L450.4 199.5L458.1 184.6L565.8 184.6L572.3 188.1L597.5 188.5L602.9 195.1L668.8 196.2L684.2 199.1L710.6 196.9L723.7 192.5L761.1 192.9L769.9 184.6L794 184.2L802.8 179.3L833.6 179.3L842.3 184.6L875.1 183.7L883.9 186.4L915.8 186.4L923.5 192.9L932.2 197.8L958.6 197.8L963 192.5L993.7 189.7L1004.7 182L1020.1 181.5L1037.7 178.7L1088.2 178.7L1096.7 185.9L1129.7 185.9L1136.3 189.7L1169.2 189L1186.8 187.5L1194.5 177.6L1227.4 177.6" stroke="#008c00" stroke-width="1" fill="none" stroke-linejoin="round"/><rect x="86" y="191" width="1228" height="1" fill="#0000e0" shape-rendering="crispEdges"/><path d="M85 173.2L105.4 176.9L139.4 170.3L273.4 170.3L291 175.4L308.5 176.9L333 177.6L354.9 181.3L374.7 181.3L383.5 180.2L396.6 183.1L409.8 183.1L418.6 180.9L431.8 178.7L451.5 174.9L497.7 174.9L506.5 176.9L519.6 176.5L532.8 173.2L539.4 173.2L548.2 175.8L572.3 177.6L585.5 179.3L597.5 179.8L635.9 186.8L668.8 186.8L693 190.3L701.8 189.7L712.8 186.8L728.1 186.8L736.9 188.6L745.7 187.5L767.7 183.1L794 177.6L800.6 177.6L811.6 180.9L833.6 185.3L846.7 187.5L875.1 187.5L890.5 191.8L912.5 193.4L927.9 196.9L941 196.2L958.6 191.8L971.8 192.9L993.7 190.7L1015.7 189.7L1026.7 185.9L1055.2 185.3L1070.6 189L1092.4 190.3L1105.5 192.9L1120.9 193.4L1129.7 190.3L1140.7 194L1153.9 192.5L1169.2 188.6L1189 185.3L1219.7 184.8L1227.4 185.9" stroke="#000" stroke-width="2.4" fill="none" stroke-linejoin="round"/><path d="M106.5 170.2L408.7 170.2L416.4 181.3L517.4 181.3L521.8 178.7L541.6 178.7L548.2 175.8L600 176.5L736.9 176.5L743.5 188.1L769.9 189.7L776.5 185.3L794 183.7L971.8 183.7L978.4 190.7L990 192.9L1015.7 192.9L1022.3 188.1L1070.6 188.1L1092.6 190.7L1100 191.2L1219.7 191.2L1227.4 185.3" stroke="#ff0000" stroke-width="2.2" fill="none" stroke-linejoin="round"/><path d="M85 167.8L302 167.8L309.9 174.7L333 174.7L342.8 176.9L383.5 176.9L394.4 180.2L541.6 180.2L548.2 174.9L597.5 174.9L602.9 178L618.3 181.3L668.8 182L677.6 186.4L693 189L761.1 189L769.9 185.3L805 184.6L811.6 186.8L833.6 186.8L842.3 184.4L844.4 184.6L875.1 184.6L883.9 187.5L915.8 187.5L923.5 194L945.4 194L952 191.8L1092.6 191.8L1096.7 188.1L1129.7 188.1L1136.3 190.7L1150 191.4L1227.4 191.4" stroke="#008c00" stroke-width="2.2" fill="none" stroke-linejoin="round"/><path d="M85 199.1L105.4 203.9L126.2 194.7L148.2 187.9L165.8 190.7L179 194.7L192 189.7L201 188.1L227.3 191.8L238.3 189.7L253.6 189L273.4 194L293.2 200.6L308.5 200.6L333 199.1L354.9 202.2L370.3 204.6L384.6 200.6L398.8 204.4L409.8 202.8L420.8 195.1L431.8 189.7L451.5 184.6L497.7 185.9L506.5 188.6L519.6 187.5L532.8 183.7L539.4 183.7L548.2 188.6L557 191.2L572.3 192L592 195.1L613.9 196.9L635.9 200.6L668.8 199.5L684.2 199.5L697.4 197.3L710.6 192.9L723.7 192.5L732.5 195.6L741.3 192.9L756.7 186.4L767.7 183.7L794 178.7L800.6 178.7L811.6 184.2L833.6 188.6L846.7 192.5L862 193.4L875.1 192.9L890.5 196.2L905.9 199.5L912.5 199.5L927.9 197.8L941 196.2L958.6 190.3L967.4 190.7L971.8 192.9L980.6 188.1L998.1 182L1015.7 182L1026.7 179.8L1055.2 179.8L1068.4 185.9L1079.4 188.6L1088.2 186.2L1099.2 190.3L1109.9 194L1120.9 193.4L1129.7 189L1140.7 190.7L1153.9 188.1L1169.2 182L1184.6 177.6L1193.4 177.6L1206.6 179.8L1227.4 179.3" stroke="#fff" stroke-width="2.4" fill="none" stroke-linejoin="round"/><g shape-rendering="crispEdges"><rect x="1313" y="165" width="1" height="44" fill="#fff"/><rect x="1314" y="191" width="7" height="1" fill="#fff"/><rect x="1314" y="173" width="3" height="1" fill="#fff"/><rect x="1314" y="182" width="3" height="1" fill="#fff"/><rect x="1314" y="199" width="3" height="1" fill="#fff"/><rect x="1314" y="208" width="3" height="1" fill="#fff"/></g><text x="1353" y="196" font-family="Liberation Sans, Arial, sans-serif" font-size="11.5" fill="#fff">0</text><rect x="35" y="214" width="1329" height="21" fill="#dcdcdc"/><rect x="35" y="235" width="1329" height="1" fill="#6e6e6e"/><text x="59" y="229.3" font-family="Liberation Sans, Arial, sans-serif" font-size="14.5" textLength="170" lengthAdjust="spacingAndGlyphs" xml:space="preserve"><tspan fill="#44546a">Trend MI5 (</tspan><tspan fill="#f4f4f4">60.0000,</tspan><tspan fill="#000"> </tspan><tspan fill="#101018">0.00</tspan><tspan fill="#44546a"> )</tspan></text><rect x="1319.5" y="215.5" width="16" height="12" fill="#f6f6f6" stroke="#c4c4c4" shape-rendering="crispEdges"/><rect x="1319" y="228" width="17" height="1" fill="#fdfdfd"/><rect x="1324" y="219" width="7" height="5" fill="none" stroke="#7a7a7a" stroke-width="1.6"/><rect x="1341.5" y="215.5" width="16" height="12" fill="#f6f6f6" stroke="#c4c4c4" shape-rendering="crispEdges"/><rect x="1341" y="228" width="17" height="1" fill="#fdfdfd"/><path d="M1346.5 218.5L1352.5 224.5M1352.5 218.5L1346.5 224.5" stroke="#7a7a7a" stroke-width="1.8" fill="none"/><rect x="35" y="236" width="1329" height="34" fill="#ff6b22"/><rect x="35" y="270" width="1329" height="2" fill="#f3f3f3"/><rect x="35" y="272" width="1329" height="3" fill="#e3e3e3"/><g shape-rendering="crispEdges"><rect x="85" y="236" width="1" height="34" fill="#000"/><rect x="78" y="238" width="7" height="1" fill="#000"/><rect x="78" y="254" width="7" height="1" fill="#000"/><rect x="78" y="268" width="7" height="1" fill="#000"/><rect x="82" y="246" width="3" height="1" fill="#000"/><rect x="82" y="260" width="3" height="1" fill="#000"/></g><text x="67" y="259" font-family="Liberation Sans, Arial, sans-serif" font-size="11.5" fill="#000">0</text><g shape-rendering="crispEdges" stroke-width="1"><line x1="118.5" y1="236" x2="118.5" y2="270" stroke="#ffff00"/><line x1="126.5" y1="236" x2="126.5" y2="270" stroke="#009000"/><line x1="274.5" y1="236" x2="274.5" y2="270" stroke="#ffff00"/><line x1="355.5" y1="236" x2="355.5" y2="270" stroke="#ff0000"/><line x1="364.5" y1="236" x2="364.5" y2="270" stroke="#ffff00"/><line x1="396.5" y1="236" x2="396.5" y2="270" stroke="#ff0000"/><line x1="421.5" y1="236" x2="421.5" y2="270" stroke="#009000"/><line x1="576.5" y1="236" x2="576.5" y2="270" stroke="#ffff00"/><line x1="584.5" y1="236" x2="584.5" y2="270" stroke="#ff0000"/><line x1="593.5" y1="236" x2="593.5" y2="270" stroke="#ffff00"/><line x1="601.5" y1="236" x2="601.5" y2="270" stroke="#ff0000"/><line x1="740.5" y1="236" x2="740.5" y2="270" stroke="#ffff00"/><line x1="781.5" y1="236" x2="781.5" y2="270" stroke="#009000"/><line x1="805.5" y1="236" x2="805.5" y2="270" stroke="#ffff00"/><line x1="822.5" y1="236" x2="822.5" y2="270" stroke="#ff0000"/><line x1="977.5" y1="236" x2="977.5" y2="270" stroke="#ffff00"/><line x1="1026.5" y1="236" x2="1026.5" y2="270" stroke="#009000"/><line x1="1034.5" y1="236" x2="1034.5" y2="270" stroke="#ffff00"/><line x1="1067.5" y1="236" x2="1067.5" y2="270" stroke="#ff0000"/><line x1="1083.5" y1="236" x2="1083.5" y2="270" stroke="#ffff00"/><line x1="1091.5" y1="236" x2="1091.5" y2="270" stroke="#ff0000"/><line x1="1149.5" y1="236" x2="1149.5" y2="270" stroke="#ffff00"/><line x1="1181.5" y1="236" x2="1181.5" y2="270" stroke="#009000"/><line x1="1214.5" y1="236" x2="1214.5" y2="270" stroke="#ffff00"/><line x1="1222.5" y1="236" x2="1222.5" y2="270" stroke="#009000"/></g><path d="M123.06 252.5V239.3M131.24 252.5V239.5M139.42 252.5V239.5M147.6 252.5V239.5M155.77 252.5V242.3M163.95 252.5V242.3M172.13 252.5V245.2M180.31 252.5V248M188.49 252.5V239.3M196.66 252.5V239.3M204.84 252.5V242M213.02 252.5V240.5M221.2 252.5V242M229.38 252.5V243M237.55 252.5V239.5M245.73 252.5V243M253.91 252.5V239.7M262.09 252.5V241M270.27 252.5V245.5M278.44 252.5V246.5M286.62 252.5V248.5M294.8 252.5V248.5M302.98 252.5V245.2M311.16 252.5V248.5M319.33 252.5V246M327.51 252.5V245.2M335.69 252.5V245.2M343.87 252.5V248M352.05 252.5V248M368.4 252.5V252.2M376.58 252.5V252.2M384.76 252.5V245.2M392.94 252.5V248.9M425.65 252.5V243.5M433.83 252.5V243.5M442 252.5V242.2M450.18 252.5V242.2M458.36 252.5V243.5M466.54 252.5V240.2M474.72 252.5V240.2M482.89 252.5V242.2M491.07 252.5V240.2M499.25 252.5V242.2M507.43 252.5V248.5M515.61 252.5V243.5M523.78 252.5V239M531.96 252.5V239M540.14 252.5V242.2M548.32 252.5V243.5M556.5 252.5V245.9M564.67 252.5V239.7M572.85 252.5V245.2M581.03 252.5V248.5M597.39 252.5V252.2M793.66 252.5V248.5M801.84 252.5V248.5M1186.2 252.5V245.2M1194.38 252.5V245.2M1202.56 252.5V248.5M1210.74 252.5V248.5M1227.09 252.5V245.9" stroke="#fff" stroke-width="3" stroke-linecap="round" fill="none"/><path d="M98.53 254.5V262.4M106.71 254.5V263.2M114.88 254.5V259.5M401.11 254.5V259.1M409.29 254.5V260.9M417.47 254.5V256.5M605.56 254.5V259.1M613.74 254.5V256.1M621.92 254.5V262.9M630.1 254.5V265.8M638.28 254.5V266.5M646.45 254.5V264.1M654.63 254.5V264.1M662.81 254.5V264.1M670.99 254.5V264.1M679.17 254.5V266.5M687.34 254.5V264.1M695.52 254.5V266.5M703.7 254.5V259.1M711.88 254.5V257.1M720.06 254.5V262.9M728.23 254.5V262.9M736.41 254.5V265.8M744.59 254.5V260.4M752.77 254.5V257.1M760.95 254.5V257.1M769.12 254.5V260.4M777.3 254.5V257.9M810.01 254.5V254.5M818.19 254.5V264.8M826.37 254.5V266.5M834.55 254.5V259.9M842.73 254.5V266.5M850.9 254.5V264.8M859.08 254.5V263.4M867.26 254.5V263.4M875.44 254.5V263.4M883.62 254.5V265.3M891.79 254.5V264.1M899.97 254.5V266.5M908.15 254.5V266.5M916.33 254.5V263.4M924.51 254.5V266.5M932.68 254.5V263.4M940.86 254.5V263.4M949.04 254.5V259.9M957.22 254.5V259.9M965.4 254.5V262.9M973.57 254.5V265.8M981.75 254.5V259.9M989.93 254.5V257.4M998.11 254.5V257.4M1006.29 254.5V259.1M1014.46 254.5V259.9M1022.64 254.5V257.4M1039 254.5V254.5M1063.53 254.5V260.9M1071.71 254.5V260.4M1079.89 254.5V260.4M1088.07 254.5V256.5M1096.24 254.5V262.9M1104.42 254.5V264.1M1112.6 254.5V266.5M1120.78 254.5V259.9M1128.96 254.5V258.4M1137.13 254.5V265.8M1145.31 254.5V261.5M1153.49 254.5V259.1M1161.67 254.5V257.4M1169.85 254.5V257.4M1178.02 254.5V255.4M1218.91 254.5V254.5" stroke="#000" stroke-width="3" stroke-linecap="round" fill="none"/><path d="M88.75 254L90.35 252.4L91.95 254L90.35 255.6ZM96.93 254L98.53 252.4L100.13 254L98.53 255.6ZM105.11 254L106.71 252.4L108.31 254L106.71 255.6ZM113.28 254L114.88 252.4L116.48 254L114.88 255.6ZM121.46 254L123.06 252.4L124.66 254L123.06 255.6ZM129.64 254L131.24 252.4L132.84 254L131.24 255.6ZM137.82 254L139.42 252.4L141.02 254L139.42 255.6ZM146 254L147.6 252.4L149.2 254L147.6 255.6ZM154.17 254L155.77 252.4L157.37 254L155.77 255.6ZM162.35 254L163.95 252.4L165.55 254L163.95 255.6ZM170.53 254L172.13 252.4L173.73 254L172.13 255.6ZM178.71 254L180.31 252.4L181.91 254L180.31 255.6ZM186.89 254L188.49 252.4L190.09 254L188.49 255.6ZM195.06 254L196.66 252.4L198.26 254L196.66 255.6ZM203.24 254L204.84 252.4L206.44 254L204.84 255.6ZM211.42 254L213.02 252.4L214.62 254L213.02 255.6ZM219.6 254L221.2 252.4L222.8 254L221.2 255.6ZM227.78 254L229.38 252.4L230.98 254L229.38 255.6ZM235.95 254L237.55 252.4L239.15 254L237.55 255.6ZM244.13 254L245.73 252.4L247.33 254L245.73 255.6ZM252.31 254L253.91 252.4L255.51 254L253.91 255.6ZM260.49 254L262.09 252.4L263.69 254L262.09 255.6ZM268.67 254L270.27 252.4L271.87 254L270.27 255.6ZM276.84 254L278.44 252.4L280.04 254L278.44 255.6ZM285.02 254L286.62 252.4L288.22 254L286.62 255.6ZM293.2 254L294.8 252.4L296.4 254L294.8 255.6ZM301.38 254L302.98 252.4L304.58 254L302.98 255.6ZM309.56 254L311.16 252.4L312.76 254L311.16 255.6ZM317.73 254L319.33 252.4L320.93 254L319.33 255.6ZM325.91 254L327.51 252.4L329.11 254L327.51 255.6ZM334.09 254L335.69 252.4L337.29 254L335.69 255.6ZM342.27 254L343.87 252.4L345.47 254L343.87 255.6ZM350.45 254L352.05 252.4L353.65 254L352.05 255.6ZM358.62 254L360.22 252.4L361.82 254L360.22 255.6ZM366.8 254L368.4 252.4L370 254L368.4 255.6ZM374.98 254L376.58 252.4L378.18 254L376.58 255.6ZM383.16 254L384.76 252.4L386.36 254L384.76 255.6ZM391.34 254L392.94 252.4L394.54 254L392.94 255.6ZM399.51 254L401.11 252.4L402.71 254L401.11 255.6ZM407.69 254L409.29 252.4L410.89 254L409.29 255.6ZM415.87 254L417.47 252.4L419.07 254L417.47 255.6ZM424.05 254L425.65 252.4L427.25 254L425.65 255.6ZM432.23 254L433.83 252.4L435.43 254L433.83 255.6ZM440.4 254L442 252.4L443.6 254L442 255.6ZM448.58 254L450.18 252.4L451.78 254L450.18 255.6ZM456.76 254L458.36 252.4L459.96 254L458.36 255.6ZM464.94 254L466.54 252.4L468.14 254L466.54 255.6ZM473.12 254L474.72 252.4L476.32 254L474.72 255.6ZM481.29 254L482.89 252.4L484.49 254L482.89 255.6ZM489.47 254L491.07 252.4L492.67 254L491.07 255.6ZM497.65 254L499.25 252.4L500.85 254L499.25 255.6ZM505.83 254L507.43 252.4L509.03 254L507.43 255.6ZM514.01 254L515.61 252.4L517.21 254L515.61 255.6ZM522.18 254L523.78 252.4L525.38 254L523.78 255.6ZM530.36 254L531.96 252.4L533.56 254L531.96 255.6ZM538.54 254L540.14 252.4L541.74 254L540.14 255.6ZM546.72 254L548.32 252.4L549.92 254L548.32 255.6ZM554.9 254L556.5 252.4L558.1 254L556.5 255.6ZM563.07 254L564.67 252.4L566.27 254L564.67 255.6ZM571.25 254L572.85 252.4L574.45 254L572.85 255.6ZM579.43 254L581.03 252.4L582.63 254L581.03 255.6ZM587.61 254L589.21 252.4L590.81 254L589.21 255.6ZM595.79 254L597.39 252.4L598.99 254L597.39 255.6ZM603.96 254L605.56 252.4L607.16 254L605.56 255.6ZM612.14 254L613.74 252.4L615.34 254L613.74 255.6ZM620.32 254L621.92 252.4L623.52 254L621.92 255.6ZM628.5 254L630.1 252.4L631.7 254L630.1 255.6ZM636.68 254L638.28 252.4L639.88 254L638.28 255.6ZM644.85 254L646.45 252.4L648.05 254L646.45 255.6ZM653.03 254L654.63 252.4L656.23 254L654.63 255.6ZM661.21 254L662.81 252.4L664.41 254L662.81 255.6ZM669.39 254L670.99 252.4L672.59 254L670.99 255.6ZM677.57 254L679.17 252.4L680.77 254L679.17 255.6ZM685.74 254L687.34 252.4L688.94 254L687.34 255.6ZM693.92 254L695.52 252.4L697.12 254L695.52 255.6ZM702.1 254L703.7 252.4L705.3 254L703.7 255.6ZM710.28 254L711.88 252.4L713.48 254L711.88 255.6ZM718.46 254L720.06 252.4L721.66 254L720.06 255.6ZM726.63 254L728.23 252.4L729.83 254L728.23 255.6ZM734.81 254L736.41 252.4L738.01 254L736.41 255.6ZM742.99 254L744.59 252.4L746.19 254L744.59 255.6ZM751.17 254L752.77 252.4L754.37 254L752.77 255.6ZM759.35 254L760.95 252.4L762.55 254L760.95 255.6ZM767.52 254L769.12 252.4L770.72 254L769.12 255.6ZM775.7 254L777.3 252.4L778.9 254L777.3 255.6ZM783.88 254L785.48 252.4L787.08 254L785.48 255.6ZM792.06 254L793.66 252.4L795.26 254L793.66 255.6ZM800.24 254L801.84 252.4L803.44 254L801.84 255.6ZM808.41 254L810.01 252.4L811.61 254L810.01 255.6ZM816.59 254L818.19 252.4L819.79 254L818.19 255.6ZM824.77 254L826.37 252.4L827.97 254L826.37 255.6ZM832.95 254L834.55 252.4L836.15 254L834.55 255.6ZM841.13 254L842.73 252.4L844.33 254L842.73 255.6ZM849.3 254L850.9 252.4L852.5 254L850.9 255.6ZM857.48 254L859.08 252.4L860.68 254L859.08 255.6ZM865.66 254L867.26 252.4L868.86 254L867.26 255.6ZM873.84 254L875.44 252.4L877.04 254L875.44 255.6ZM882.02 254L883.62 252.4L885.22 254L883.62 255.6ZM890.19 254L891.79 252.4L893.39 254L891.79 255.6ZM898.37 254L899.97 252.4L901.57 254L899.97 255.6ZM906.55 254L908.15 252.4L909.75 254L908.15 255.6ZM914.73 254L916.33 252.4L917.93 254L916.33 255.6ZM922.91 254L924.51 252.4L926.11 254L924.51 255.6ZM931.08 254L932.68 252.4L934.28 254L932.68 255.6ZM939.26 254L940.86 252.4L942.46 254L940.86 255.6ZM947.44 254L949.04 252.4L950.64 254L949.04 255.6ZM955.62 254L957.22 252.4L958.82 254L957.22 255.6ZM963.8 254L965.4 252.4L967 254L965.4 255.6ZM971.97 254L973.57 252.4L975.17 254L973.57 255.6ZM980.15 254L981.75 252.4L983.35 254L981.75 255.6ZM988.33 254L989.93 252.4L991.53 254L989.93 255.6ZM996.51 254L998.11 252.4L999.71 254L998.11 255.6ZM1004.69 254L1006.29 252.4L1007.89 254L1006.29 255.6ZM1012.86 254L1014.46 252.4L1016.06 254L1014.46 255.6ZM1021.04 254L1022.64 252.4L1024.24 254L1022.64 255.6ZM1029.22 254L1030.82 252.4L1032.42 254L1030.82 255.6ZM1037.4 254L1039 252.4L1040.6 254L1039 255.6ZM1045.58 254L1047.18 252.4L1048.78 254L1047.18 255.6ZM1053.75 254L1055.35 252.4L1056.95 254L1055.35 255.6ZM1061.93 254L1063.53 252.4L1065.13 254L1063.53 255.6ZM1070.11 254L1071.71 252.4L1073.31 254L1071.71 255.6ZM1078.29 254L1079.89 252.4L1081.49 254L1079.89 255.6ZM1086.47 254L1088.07 252.4L1089.67 254L1088.07 255.6ZM1094.64 254L1096.24 252.4L1097.84 254L1096.24 255.6ZM1102.82 254L1104.42 252.4L1106.02 254L1104.42 255.6ZM1111 254L1112.6 252.4L1114.2 254L1112.6 255.6ZM1119.18 254L1120.78 252.4L1122.38 254L1120.78 255.6ZM1127.36 254L1128.96 252.4L1130.56 254L1128.96 255.6ZM1135.53 254L1137.13 252.4L1138.73 254L1137.13 255.6ZM1143.71 254L1145.31 252.4L1146.91 254L1145.31 255.6ZM1151.89 254L1153.49 252.4L1155.09 254L1153.49 255.6ZM1160.07 254L1161.67 252.4L1163.27 254L1161.67 255.6ZM1168.25 254L1169.85 252.4L1171.45 254L1169.85 255.6ZM1176.42 254L1178.02 252.4L1179.62 254L1178.02 255.6ZM1184.6 254L1186.2 252.4L1187.8 254L1186.2 255.6ZM1192.78 254L1194.38 252.4L1195.98 254L1194.38 255.6ZM1200.96 254L1202.56 252.4L1204.16 254L1202.56 255.6ZM1209.14 254L1210.74 252.4L1212.34 254L1210.74 255.6ZM1217.31 254L1218.91 252.4L1220.51 254L1218.91 255.6ZM1225.49 254L1227.09 252.4L1228.69 254L1227.09 255.6Z" fill="#000"/><g shape-rendering="crispEdges"><rect x="1313" y="236" width="1" height="34" fill="#fff"/><rect x="1314" y="238" width="7" height="1" fill="#fff"/><rect x="1314" y="254" width="7" height="1" fill="#fff"/><rect x="1314" y="268" width="7" height="1" fill="#fff"/><rect x="1314" y="246" width="3" height="1" fill="#fff"/><rect x="1314" y="260" width="3" height="1" fill="#fff"/></g><text x="1353" y="259" font-family="Liberation Sans, Arial, sans-serif" font-size="11.5" fill="#fff">0</text><rect x="35" y="275" width="1329" height="21" fill="#dcdcdc"/><rect x="35" y="296" width="1329" height="1" fill="#6e6e6e"/><text x="59" y="290.6" font-family="Liberation Sans, Arial, sans-serif" font-size="14.5" textLength="712" lengthAdjust="spacingAndGlyphs" xml:space="preserve"><tspan fill="#44546a">GALP ENERGIA-NOM ORD </tspan><tspan fill="#bcbcbc">(10.2000, 10.4100, 10.1050, 10.3800, +0.21000)</tspan><tspan fill="#44546a">, Forecast Prices (</tspan><tspan fill="#e8102c">10.5751,</tspan><tspan fill="#000"> </tspan><tspan fill="#186838">10.2637</tspan><tspan fill="#44546a"> )</tspan></text><rect x="1319.5" y="276.5" width="16" height="12" fill="#f6f6f6" stroke="#c4c4c4" shape-rendering="crispEdges"/><rect x="1319" y="289" width="17" height="1" fill="#fdfdfd"/><rect x="1324" y="280" width="7" height="5" fill="none" stroke="#7a7a7a" stroke-width="1.6"/><rect x="1341.5" y="276.5" width="16" height="12" fill="#f6f6f6" stroke="#c4c4c4" shape-rendering="crispEdges"/><rect x="1341" y="289" width="17" height="1" fill="#fdfdfd"/><path d="M1346.5 279.5L1352.5 285.5M1352.5 279.5L1346.5 285.5" stroke="#7a7a7a" stroke-width="1.8" fill="none"/><rect x="35" y="296" width="1329" height="301" fill="#282828"/><g shape-rendering="crispEdges" stroke-width="1"><line x1="118.5" y1="296" x2="118.5" y2="597" stroke="#ffff00"/><line x1="126.5" y1="296" x2="126.5" y2="597" stroke="#009000"/><line x1="274.5" y1="296" x2="274.5" y2="597" stroke="#ffff00"/><line x1="355.5" y1="296" x2="355.5" y2="597" stroke="#ff0000"/><line x1="364.5" y1="296" x2="364.5" y2="597" stroke="#ffff00"/><line x1="396.5" y1="296" x2="396.5" y2="597" stroke="#ff0000"/><line x1="421.5" y1="296" x2="421.5" y2="597" stroke="#009000"/><line x1="576.5" y1="296" x2="576.5" y2="597" stroke="#ffff00"/><line x1="584.5" y1="296" x2="584.5" y2="597" stroke="#ff0000"/><line x1="593.5" y1="296" x2="593.5" y2="597" stroke="#ffff00"/><line x1="601.5" y1="296" x2="601.5" y2="597" stroke="#ff0000"/><line x1="740.5" y1="296" x2="740.5" y2="597" stroke="#ffff00"/><line x1="781.5" y1="296" x2="781.5" y2="597" stroke="#009000"/><line x1="805.5" y1="296" x2="805.5" y2="597" stroke="#ffff00"/><line x1="822.5" y1="296" x2="822.5" y2="597" stroke="#ff0000"/><line x1="977.5" y1="296" x2="977.5" y2="597" stroke="#ffff00"/><line x1="1026.5" y1="296" x2="1026.5" y2="597" stroke="#009000"/><line x1="1034.5" y1="296" x2="1034.5" y2="597" stroke="#ffff00"/><line x1="1067.5" y1="296" x2="1067.5" y2="597" stroke="#ff0000"/><line x1="1083.5" y1="296" x2="1083.5" y2="597" stroke="#ffff00"/><line x1="1091.5" y1="296" x2="1091.5" y2="597" stroke="#ff0000"/><line x1="1149.5" y1="296" x2="1149.5" y2="597" stroke="#ffff00"/><line x1="1181.5" y1="296" x2="1181.5" y2="597" stroke="#009000"/><line x1="1214.5" y1="296" x2="1214.5" y2="597" stroke="#ffff00"/><line x1="1222.5" y1="296" x2="1222.5" y2="597" stroke="#009000"/></g><g shape-rendering="crispEdges"><rect x="85" y="296" width="1" height="301" fill="#fff"/><rect x="78" y="325" width="7" height="1" fill="#fff"/><rect x="78" y="349" width="7" height="1" fill="#fff"/><rect x="78" y="374" width="7" height="1" fill="#fff"/><rect x="78" y="401" width="7" height="1" fill="#fff"/><rect x="78" y="430" width="7" height="1" fill="#fff"/><rect x="78" y="461" width="7" height="1" fill="#fff"/><rect x="78" y="496" width="7" height="1" fill="#fff"/><rect x="78" y="534" width="7" height="1" fill="#fff"/><rect x="78" y="577" width="7" height="1" fill="#fff"/><rect x="82" y="303" width="3" height="1" fill="#fff"/><rect x="82" y="314" width="3" height="1" fill="#fff"/><rect x="82" y="337" width="3" height="1" fill="#fff"/><rect x="82" y="361" width="3" height="1" fill="#fff"/><rect x="82" y="387" width="3" height="1" fill="#fff"/><rect x="82" y="415" width="3" height="1" fill="#fff"/><rect x="82" y="445" width="3" height="1" fill="#fff"/><rect x="82" y="478" width="3" height="1" fill="#fff"/><rect x="82" y="515" width="3" height="1" fill="#fff"/><rect x="82" y="555" width="3" height="1" fill="#fff"/><rect x="82" y="589" width="3" height="1" fill="#fff"/></g><g shape-rendering="crispEdges"><rect x="1313" y="296" width="1" height="301" fill="#fff"/><rect x="1314" y="325" width="7" height="1" fill="#fff"/><rect x="1314" y="349" width="7" height="1" fill="#fff"/><rect x="1314" y="374" width="7" height="1" fill="#fff"/><rect x="1314" y="401" width="7" height="1" fill="#fff"/><rect x="1314" y="430" width="7" height="1" fill="#fff"/><rect x="1314" y="461" width="7" height="1" fill="#fff"/><rect x="1314" y="496" width="7" height="1" fill="#fff"/><rect x="1314" y="534" width="7" height="1" fill="#fff"/><rect x="1314" y="577" width="7" height="1" fill="#fff"/><rect x="1314" y="303" width="3" height="1" fill="#fff"/><rect x="1314" y="314" width="3" height="1" fill="#fff"/><rect x="1314" y="337" width="3" height="1" fill="#fff"/><rect x="1314" y="361" width="3" height="1" fill="#fff"/><rect x="1314" y="387" width="3" height="1" fill="#fff"/><rect x="1314" y="415" width="3" height="1" fill="#fff"/><rect x="1314" y="445" width="3" height="1" fill="#fff"/><rect x="1314" y="478" width="3" height="1" fill="#fff"/><rect x="1314" y="515" width="3" height="1" fill="#fff"/><rect x="1314" y="555" width="3" height="1" fill="#fff"/><rect x="1314" y="589" width="3" height="1" fill="#fff"/></g><text x="73.5" y="330.6" text-anchor="end" font-family="Liberation Sans, Arial, sans-serif" font-size="11.5" fill="#fff">16</text><text x="1359.5" y="330.6" text-anchor="end" font-family="Liberation Sans, Arial, sans-serif" font-size="11.5" fill="#fff">16</text><text x="73.5" y="354.03" text-anchor="end" font-family="Liberation Sans, Arial, sans-serif" font-size="11.5" fill="#fff">15</text><text x="1359.5" y="354.03" text-anchor="end" font-family="Liberation Sans, Arial, sans-serif" font-size="11.5" fill="#fff">15</text><text x="73.5" y="379.09" text-anchor="end" font-family="Liberation Sans, Arial, sans-serif" font-size="11.5" fill="#fff">14</text><text x="1359.5" y="379.09" text-anchor="end" font-family="Liberation Sans, Arial, sans-serif" font-size="11.5" fill="#fff">14</text><text x="73.5" y="405.99" text-anchor="end" font-family="Liberation Sans, Arial, sans-serif" font-size="11.5" fill="#fff">13</text><text x="1359.5" y="405.99" text-anchor="end" font-family="Liberation Sans, Arial, sans-serif" font-size="11.5" fill="#fff">13</text><text x="73.5" y="435.06" text-anchor="end" font-family="Liberation Sans, Arial, sans-serif" font-size="11.5" fill="#fff">12</text><text x="1359.5" y="435.06" text-anchor="end" font-family="Liberation Sans, Arial, sans-serif" font-size="11.5" fill="#fff">12</text><text x="73.5" y="466.65" text-anchor="end" font-family="Liberation Sans, Arial, sans-serif" font-size="11.5" fill="#fff">11</text><text x="1359.5" y="466.65" text-anchor="end" font-family="Liberation Sans, Arial, sans-serif" font-size="11.5" fill="#fff">11</text><text x="73.5" y="501.26" text-anchor="end" font-family="Liberation Sans, Arial, sans-serif" font-size="11.5" fill="#fff">10</text><text x="1359.5" y="501.26" text-anchor="end" font-family="Liberation Sans, Arial, sans-serif" font-size="11.5" fill="#fff">10</text><text x="73.5" y="539.51" text-anchor="end" font-family="Liberation Sans, Arial, sans-serif" font-size="11.5" fill="#fff">9</text><text x="1359.5" y="539.51" text-anchor="end" font-family="Liberation Sans, Arial, sans-serif" font-size="11.5" fill="#fff">9</text><text x="73.5" y="582.28" text-anchor="end" font-family="Liberation Sans, Arial, sans-serif" font-size="11.5" fill="#fff">8</text><text x="1359.5" y="582.28" text-anchor="end" font-family="Liberation Sans, Arial, sans-serif" font-size="11.5" fill="#fff">8</text><rect x="37.5" y="472.5" width="42" height="17" fill="#000" stroke="#fff" shape-rendering="crispEdges"/><text x="58.5" y="485" text-anchor="middle" font-family="Liberation Sans, Arial, sans-serif" font-size="11.5" fill="#0de80d" textLength="38" lengthAdjust="spacingAndGlyphs">10.3800</text><rect x="1317.5" y="472.5" width="42" height="17" fill="#000" stroke="#fff" shape-rendering="crispEdges"/><text x="1338.5" y="485" text-anchor="middle" font-family="Liberation Sans, Arial, sans-serif" font-size="11.5" fill="#0de80d" textLength="38" lengthAdjust="spacingAndGlyphs">10.3800</text><g shape-rendering="crispEdges"><g fill="#88a8d4"><rect x="90" y="381.2" width="1" height="3.8"/><rect x="98" y="381.9" width="1" height="2.85"/><rect x="311" y="342.25" width="1" height="3.15"/><rect x="352" y="351" width="1" height="2.1"/><rect x="360" y="356.9" width="1" height="1.2"/><rect x="491" y="344.75" width="1" height="4"/><rect x="556" y="333.75" width="1" height="1.25"/><rect x="605" y="341.9" width="1" height="1.2"/><rect x="654" y="375" width="1" height="0.9"/><rect x="679" y="377.9" width="1" height="0.85"/><rect x="687" y="378.75" width="1" height="2.25"/><rect x="687" y="382.9" width="1" height="2.1"/><rect x="695" y="383.75" width="1" height="1.25"/><rect x="728" y="379.75" width="1" height="2.15"/><rect x="736" y="378.75" width="1" height="3.5"/><rect x="769" y="370" width="1" height="3.1"/><rect x="769" y="373.75" width="1" height="1.85"/><rect x="785" y="373.75" width="1" height="4.35"/><rect x="810" y="358.75" width="1" height="1.25"/><rect x="810" y="366" width="1" height="3"/><rect x="818" y="380" width="1" height="2.5"/><rect x="826" y="373.75" width="1" height="2.5"/><rect x="842" y="400" width="1" height="5"/><rect x="851" y="406.9" width="1" height="1.85"/><rect x="875" y="400" width="1" height="2.1"/><rect x="875" y="406.9" width="1" height="1.85"/><rect x="883" y="418.1" width="1" height="0.9"/><rect x="900" y="483.1" width="1" height="28.15"/><rect x="900" y="534.4" width="1" height="14.35"/><rect x="908" y="476.9" width="1" height="28.1"/><rect x="908" y="513.75" width="1" height="4"/><rect x="916" y="490" width="1" height="16.9"/><rect x="916" y="517.75" width="1" height="7.85"/><rect x="924" y="523.75" width="1" height="2.25"/><rect x="924" y="556.9" width="1" height="2.85"/><rect x="941" y="564.75" width="1" height="19"/><rect x="957" y="543.1" width="1" height="8.8"/><rect x="957" y="555" width="1" height="11.9"/><rect x="965" y="541" width="1" height="6.9"/><rect x="965" y="555" width="1" height="3.75"/><rect x="973" y="528.1" width="1" height="7.9"/><rect x="973" y="565.9" width="1" height="2"/><rect x="1014" y="503.1" width="1" height="2.15"/><rect x="1014" y="509.75" width="1" height="4"/><rect x="1039" y="482.25" width="1" height="6.15"/><rect x="1055" y="480" width="1" height="2"/><rect x="1055" y="483" width="1" height="5.75"/><rect x="1063" y="476" width="1" height="0.9"/><rect x="1080" y="493.1" width="1" height="2.9"/><rect x="1080" y="497" width="1" height="10.75"/><rect x="1096" y="475" width="1" height="5"/><rect x="1096" y="490" width="1" height="3.75"/><rect x="1104" y="508.75" width="1" height="2.75"/><rect x="1112" y="506.25" width="1" height="1.85"/><rect x="1112" y="523.75" width="1" height="1.85"/><rect x="1129" y="510" width="1" height="0.9"/><rect x="1129" y="512.9" width="1" height="11.85"/><rect x="1137" y="516" width="1" height="0.9"/><rect x="1137" y="531" width="1" height="3.75"/><rect x="1161" y="508.75" width="1" height="9.35"/><rect x="1161" y="523.75" width="1" height="2.75"/><rect x="1202" y="484" width="1" height="1"/><rect x="1202" y="494.7" width="1" height="9.05"/><rect x="1219" y="489.75" width="1" height="4"/></g><g fill="#dcdcdc"><rect x="115" y="379.75" width="1" height="1.5"/><rect x="115" y="385" width="1" height="1"/><rect x="123" y="375" width="1" height="2.25"/><rect x="131" y="375" width="1" height="1"/><rect x="139" y="365.6" width="1" height="1.65"/><rect x="164" y="359" width="1" height="2.9"/><rect x="196" y="352.25" width="1" height="1.5"/><rect x="254" y="347.75" width="1" height="1.85"/><rect x="384" y="362.5" width="1" height="1.25"/><rect x="425" y="360.9" width="1" height="1"/><rect x="532" y="325.6" width="1" height="4.4"/><rect x="564" y="336.9" width="1" height="2.1"/><rect x="646" y="366.25" width="1" height="1.5"/><rect x="671" y="371.9" width="1" height="3.1"/><rect x="703" y="387.75" width="1" height="1.25"/><rect x="712" y="371.9" width="1" height="3.1"/><rect x="712" y="381.9" width="1" height="1"/><rect x="761" y="375" width="1" height="3.75"/><rect x="777" y="368.5" width="1" height="1.5"/><rect x="793" y="364.75" width="1" height="2.15"/><rect x="834" y="378.75" width="1" height="2.5"/><rect x="834" y="386.9" width="1" height="4.1"/><rect x="859" y="409.75" width="1" height="5.25"/><rect x="867" y="396.25" width="1" height="6.85"/><rect x="867" y="404" width="1" height="1"/><rect x="932" y="516.9" width="1" height="24.1"/><rect x="932" y="551.6" width="1" height="8.15"/><rect x="949" y="547.75" width="1" height="19.15"/><rect x="981" y="559" width="1" height="4.5"/><rect x="981" y="577.5" width="1" height="11.5"/><rect x="990" y="549.75" width="1" height="5.25"/><rect x="998" y="489.4" width="1" height="16.6"/><rect x="998" y="510" width="1" height="13.75"/><rect x="1006" y="515.9" width="1" height="1.1"/><rect x="1022" y="507.75" width="1" height="11"/><rect x="1031" y="492.75" width="1" height="1"/><rect x="1047" y="459" width="1" height="18"/><rect x="1047" y="478" width="1" height="10.75"/><rect x="1071" y="483.1" width="1" height="5"/><rect x="1071" y="494.75" width="1" height="4"/><rect x="1088" y="480" width="1" height="6.25"/><rect x="1120" y="517.9" width="1" height="1.85"/><rect x="1145" y="521.25" width="1" height="1.85"/><rect x="1145" y="532.75" width="1" height="2.25"/><rect x="1153" y="510.9" width="1" height="6.6"/><rect x="1170" y="515.9" width="1" height="13.85"/><rect x="1178" y="497.25" width="1" height="3.75"/><rect x="1178" y="514.75" width="1" height="8.15"/><rect x="1194" y="469.4" width="1" height="7.5"/><rect x="1210" y="475" width="1" height="4.75"/><rect x="1210" y="481.9" width="1" height="6.85"/><rect x="1227" y="480.6" width="1" height="1.65"/><rect x="1227" y="488.75" width="1" height="3.15"/></g><rect x="87" y="385" width="6" height="1.5" fill="#88a8d4"/><rect x="95" y="384.75" width="6" height="1" fill="#88a8d4"/><rect x="103" y="385" width="6" height="1" fill="#88a8d4"/><rect x="112.5" y="381.5" width="5" height="3" fill="#282828" stroke="#dcdcdc" stroke-width="1"/><rect x="120.5" y="377.5" width="5" height="8" fill="#282828" stroke="#dcdcdc" stroke-width="1"/><rect x="128.5" y="370.5" width="5" height="4" fill="#282828" stroke="#dcdcdc" stroke-width="1"/><rect x="136.5" y="367.5" width="5" height="3" fill="#282828" stroke="#dcdcdc" stroke-width="1"/><rect x="144.5" y="358.5" width="5" height="7" fill="#282828" stroke="#dcdcdc" stroke-width="1"/><rect x="152" y="359.1" width="6" height="1.8" fill="#88a8d4"/><rect x="161" y="358.1" width="6" height="1" fill="#dcdcdc"/><rect x="169" y="358.1" width="6" height="7.9" fill="#88a8d4"/><rect x="177" y="365.4" width="6" height="1.1" fill="#dcdcdc"/><rect x="185.5" y="358.5" width="5" height="6" fill="#282828" stroke="#dcdcdc" stroke-width="1"/><rect x="193.5" y="354.5" width="5" height="4" fill="#282828" stroke="#dcdcdc" stroke-width="1"/><rect x="202" y="351.9" width="6" height="1" fill="#dcdcdc"/><rect x="210.5" y="349.5" width="5" height="3" fill="#282828" stroke="#dcdcdc" stroke-width="1"/><rect x="218" y="349" width="6" height="1.6" fill="#88a8d4"/><rect x="226" y="350" width="6" height="1" fill="#88a8d4"/><rect x="234.5" y="347.5" width="5" height="3" fill="#282828" stroke="#dcdcdc" stroke-width="1"/><rect x="242" y="346" width="6" height="1" fill="#dcdcdc"/><rect x="251.5" y="345.5" width="5" height="2" fill="#282828" stroke="#dcdcdc" stroke-width="1"/><rect x="259" y="344.1" width="6" height="1.8" fill="#dcdcdc"/><rect x="267" y="343.1" width="6" height="1.65" fill="#dcdcdc"/><rect x="275.5" y="342.5" width="5" height="3" fill="#282828" stroke="#dcdcdc" stroke-width="1"/><rect x="283" y="342.25" width="6" height="2.75" fill="#88a8d4"/><rect x="292" y="346.25" width="6" height="1.5" fill="#88a8d4"/><rect x="300.5" y="343.5" width="5" height="2" fill="#282828" stroke="#dcdcdc" stroke-width="1"/><rect x="308" y="345.4" width="6" height="2.35" fill="#88a8d4"/><rect x="316" y="346.25" width="6" height="3.5" fill="#88a8d4"/><rect x="324" y="350" width="6" height="1.6" fill="#88a8d4"/><rect x="332" y="352.1" width="6" height="1.65" fill="#88a8d4"/><rect x="341" y="353.1" width="6" height="1" fill="#88a8d4"/><rect x="349" y="353.1" width="6" height="3.8" fill="#88a8d4"/><rect x="357" y="358.1" width="6" height="5" fill="#88a8d4"/><rect x="365.5" y="362.5" width="5" height="2" fill="#282828" stroke="#dcdcdc" stroke-width="1"/><rect x="373" y="360" width="6" height="1" fill="#dcdcdc"/><rect x="381.5" y="358.5" width="5" height="3" fill="#282828" stroke="#dcdcdc" stroke-width="1"/><rect x="390" y="358.1" width="6" height="1.65" fill="#88a8d4"/><rect x="398" y="361" width="6" height="6.75" fill="#88a8d4"/><rect x="406.5" y="366.5" width="5" height="2" fill="#282828" stroke="#dcdcdc" stroke-width="1"/><rect x="414.5" y="362.5" width="5" height="5" fill="#282828" stroke="#dcdcdc" stroke-width="1"/><rect x="422.5" y="358.5" width="5" height="2" fill="#282828" stroke="#dcdcdc" stroke-width="1"/><rect x="431.5" y="356.5" width="5" height="2" fill="#282828" stroke="#dcdcdc" stroke-width="1"/><rect x="439.5" y="350.5" width="5" height="4" fill="#282828" stroke="#dcdcdc" stroke-width="1"/><rect x="447" y="349.4" width="6" height="1.2" fill="#dcdcdc"/><rect x="455.5" y="347.5" width="5" height="3" fill="#282828" stroke="#dcdcdc" stroke-width="1"/><rect x="463.5" y="344.5" width="5" height="4" fill="#282828" stroke="#dcdcdc" stroke-width="1"/><rect x="471.5" y="343.5" width="5" height="2" fill="#282828" stroke="#dcdcdc" stroke-width="1"/><rect x="480" y="343.1" width="6" height="2.5" fill="#88a8d4"/><rect x="488" y="343.1" width="6" height="1.65" fill="#88a8d4"/><rect x="496" y="343.1" width="6" height="1.65" fill="#88a8d4"/><rect x="504" y="345" width="6" height="5.6" fill="#88a8d4"/><rect x="512" y="349.1" width="6" height="1.8" fill="#dcdcdc"/><rect x="520.5" y="340.5" width="5" height="6" fill="#282828" stroke="#dcdcdc" stroke-width="1"/><rect x="529.5" y="330.5" width="5" height="8" fill="#282828" stroke="#dcdcdc" stroke-width="1"/><rect x="537" y="331" width="6" height="1.75" fill="#88a8d4"/><rect x="545" y="331" width="6" height="3" fill="#88a8d4"/><rect x="553" y="335" width="6" height="3.75" fill="#88a8d4"/><rect x="561.5" y="333.5" width="5" height="3" fill="#282828" stroke="#dcdcdc" stroke-width="1"/><rect x="570" y="333.1" width="6" height="1.65" fill="#88a8d4"/><rect x="578" y="334" width="6" height="3.75" fill="#88a8d4"/><rect x="586" y="338.1" width="6" height="7.9" fill="#88a8d4"/><rect x="594" y="343.75" width="6" height="2.15" fill="#dcdcdc"/><rect x="602" y="343.1" width="6" height="4.8" fill="#88a8d4"/><rect x="610" y="345" width="6" height="2.1" fill="#dcdcdc"/><rect x="619" y="349" width="6" height="3.1" fill="#88a8d4"/><rect x="627" y="352.1" width="6" height="6.65" fill="#88a8d4"/><rect x="635" y="357.9" width="6" height="13" fill="#88a8d4"/><rect x="643" y="367.75" width="6" height="2.25" fill="#dcdcdc"/><rect x="651" y="375.9" width="6" height="3.1" fill="#88a8d4"/><rect x="660.5" y="377.5" width="5" height="2" fill="#282828" stroke="#dcdcdc" stroke-width="1"/><rect x="668" y="375" width="6" height="1.9" fill="#dcdcdc"/><rect x="676" y="378.75" width="6" height="4.15" fill="#88a8d4"/><rect x="684" y="381" width="6" height="1.9" fill="#88a8d4"/><rect x="692" y="385" width="6" height="6" fill="#88a8d4"/><rect x="700.5" y="382.5" width="5" height="5" fill="#282828" stroke="#dcdcdc" stroke-width="1"/><rect x="709.5" y="375.5" width="5" height="6" fill="#282828" stroke="#dcdcdc" stroke-width="1"/><rect x="717" y="371.25" width="6" height="8.5" fill="#88a8d4"/><rect x="725" y="378.1" width="6" height="1.65" fill="#88a8d4"/><rect x="733" y="382.25" width="6" height="2.75" fill="#88a8d4"/><rect x="741.5" y="381.5" width="5" height="3" fill="#282828" stroke="#dcdcdc" stroke-width="1"/><rect x="749.5" y="373.5" width="5" height="8" fill="#282828" stroke="#dcdcdc" stroke-width="1"/><rect x="758" y="373.1" width="6" height="1.9" fill="#dcdcdc"/><rect x="766" y="373.1" width="6" height="1" fill="#88a8d4"/><rect x="774" y="370" width="6" height="2.1" fill="#dcdcdc"/><rect x="782.5" y="371.5" width="5" height="2" fill="#282828" stroke="#88a8d4" stroke-width="1"/><rect x="790.5" y="359.5" width="5" height="5" fill="#282828" stroke="#dcdcdc" stroke-width="1"/><rect x="799" y="358.75" width="6" height="1" fill="#88a8d4"/><rect x="807" y="360" width="6" height="6" fill="#88a8d4"/><rect x="815" y="373.75" width="6" height="6.25" fill="#88a8d4"/><rect x="823" y="376.25" width="6" height="7.5" fill="#88a8d4"/><rect x="831.5" y="381.5" width="5" height="5" fill="#282828" stroke="#dcdcdc" stroke-width="1"/><rect x="839" y="387.1" width="6" height="12.9" fill="#88a8d4"/><rect x="848" y="408.75" width="6" height="9.35" fill="#88a8d4"/><rect x="856" y="400.9" width="6" height="8.85" fill="#dcdcdc"/><rect x="864" y="403.1" width="6" height="1" fill="#dcdcdc"/><rect x="872" y="402.1" width="6" height="4.8" fill="#88a8d4"/><rect x="880" y="405" width="6" height="13.1" fill="#88a8d4"/><rect x="888" y="425" width="6" height="21" fill="#88a8d4"/><rect x="897.5" y="511.5" width="5" height="22" fill="#282828" stroke="#88a8d4" stroke-width="1"/><rect x="905" y="505" width="6" height="8.75" fill="#88a8d4"/><rect x="913" y="506.9" width="6" height="10.85" fill="#88a8d4"/><rect x="921" y="526" width="6" height="30.9" fill="#88a8d4"/><rect x="929" y="541" width="6" height="10.6" fill="#dcdcdc"/><rect x="938" y="560" width="6" height="4.75" fill="#88a8d4"/><rect x="946.5" y="541.5" width="5" height="6" fill="#282828" stroke="#dcdcdc" stroke-width="1"/><rect x="954" y="551.9" width="6" height="3.1" fill="#88a8d4"/><rect x="962" y="547.9" width="6" height="7.1" fill="#88a8d4"/><rect x="970" y="536" width="6" height="29.9" fill="#88a8d4"/><rect x="978.5" y="564.5" width="5" height="13" fill="#282828" stroke="#dcdcdc" stroke-width="1"/><rect x="987.5" y="518.5" width="5" height="31" fill="#282828" stroke="#dcdcdc" stroke-width="1"/><rect x="995" y="506" width="6" height="4" fill="#dcdcdc"/><rect x="1003.5" y="503.5" width="5" height="12" fill="#282828" stroke="#dcdcdc" stroke-width="1"/><rect x="1011.5" y="505.5" width="5" height="4" fill="#282828" stroke="#88a8d4" stroke-width="1"/><rect x="1019.5" y="496.5" width="5" height="11" fill="#282828" stroke="#dcdcdc" stroke-width="1"/><rect x="1028.5" y="482.5" width="5" height="10" fill="#282828" stroke="#dcdcdc" stroke-width="1"/><rect x="1036.5" y="488.5" width="5" height="3" fill="#282828" stroke="#88a8d4" stroke-width="1"/><rect x="1044" y="477" width="6" height="1" fill="#dcdcdc"/><rect x="1052" y="482" width="6" height="1" fill="#88a8d4"/><rect x="1060" y="476.9" width="6" height="21.85" fill="#88a8d4"/><rect x="1068" y="488.1" width="6" height="6.65" fill="#dcdcdc"/><rect x="1077" y="496" width="6" height="1" fill="#88a8d4"/><rect x="1085.5" y="486.5" width="5" height="7" fill="#282828" stroke="#dcdcdc" stroke-width="1"/><rect x="1093" y="480" width="6" height="10" fill="#88a8d4"/><rect x="1101" y="495.25" width="6" height="13.5" fill="#88a8d4"/><rect x="1109" y="508.1" width="6" height="15.65" fill="#88a8d4"/><rect x="1117.5" y="510.5" width="5" height="7" fill="#282828" stroke="#dcdcdc" stroke-width="1"/><rect x="1126" y="510.9" width="6" height="2" fill="#88a8d4"/><rect x="1134" y="516.9" width="6" height="14.1" fill="#88a8d4"/><rect x="1142.5" y="523.5" width="5" height="9" fill="#282828" stroke="#dcdcdc" stroke-width="1"/><rect x="1150.5" y="518.5" width="5" height="1" fill="#282828" stroke="#dcdcdc" stroke-width="1"/><rect x="1158.5" y="518.5" width="5" height="5" fill="#282828" stroke="#88a8d4" stroke-width="1"/><rect x="1167" y="512.1" width="6" height="3.8" fill="#dcdcdc"/><rect x="1175.5" y="501.5" width="5" height="13" fill="#282828" stroke="#dcdcdc" stroke-width="1"/><rect x="1183.5" y="480.5" width="5" height="21" fill="#282828" stroke="#dcdcdc" stroke-width="1"/><rect x="1191" y="476.9" width="6" height="2.1" fill="#dcdcdc"/><rect x="1199" y="485" width="6" height="9.7" fill="#88a8d4"/><rect x="1207" y="479.75" width="6" height="2.15" fill="#dcdcdc"/><rect x="1216" y="481" width="6" height="8.75" fill="#88a8d4"/><rect x="1224.5" y="482.5" width="5" height="6" fill="#282828" stroke="#dcdcdc" stroke-width="1"/></g><path d="M88.15 387.75L90.25 385.65L92.35 387.75L90.25 389.85ZM96.33 388.5L98.43 386.4L100.53 388.5L98.43 390.6ZM104.51 388.5L106.61 386.4L108.71 388.5L106.61 390.6ZM112.68 382.1L114.78 380L116.88 382.1L114.78 384.2ZM120.86 378.5L122.96 376.4L125.06 378.5L122.96 380.6ZM129.04 370.25L131.14 368.15L133.24 370.25L131.14 372.35ZM137.22 368.1L139.32 366L141.42 368.1L139.32 370.2ZM145.4 359.4L147.5 357.3L149.6 359.4L147.5 361.5ZM153.57 362.5L155.67 360.4L157.77 362.5L155.67 364.6ZM161.75 362.5L163.85 360.4L165.95 362.5L163.85 364.6ZM169.93 371.25L172.03 369.15L174.13 371.25L172.03 373.35ZM178.11 369.4L180.21 367.3L182.31 369.4L180.21 371.5ZM186.29 357.25L188.39 355.15L190.49 357.25L188.39 359.35ZM194.46 354L196.56 351.9L198.66 354L196.56 356.1ZM202.64 355.4L204.74 353.3L206.84 355.4L204.74 357.5ZM210.82 350.4L212.92 348.3L215.02 350.4L212.92 352.5ZM219 351.25L221.1 349.15L223.2 351.25L221.1 353.35ZM227.18 352.5L229.28 350.4L231.38 352.5L229.28 354.6ZM235.35 348.5L237.45 346.4L239.55 348.5L237.45 350.6ZM243.53 348.5L245.63 346.4L247.73 348.5L245.63 350.6ZM251.71 346.4L253.81 344.3L255.91 346.4L253.81 348.5ZM259.89 345.6L261.99 343.5L264.09 345.6L261.99 347.7ZM268.07 344.4L270.17 342.3L272.27 344.4L270.17 346.5ZM276.24 343.75L278.34 341.65L280.44 343.75L278.34 345.85ZM284.42 348.4L286.52 346.3L288.62 348.4L286.52 350.5ZM292.6 349.4L294.7 347.3L296.8 349.4L294.7 351.5ZM300.78 344L302.88 341.9L304.98 344L302.88 346.1ZM308.96 351.25L311.06 349.15L313.16 351.25L311.06 353.35ZM317.13 353.4L319.23 351.3L321.33 353.4L319.23 355.5ZM325.31 354.4L327.41 352.3L329.51 354.4L327.41 356.5ZM333.49 355.25L335.59 353.15L337.69 355.25L335.59 357.35ZM341.67 356.25L343.77 354.15L345.87 356.25L343.77 358.35ZM349.85 359.4L351.95 357.3L354.05 359.4L351.95 361.5ZM358.02 367.25L360.12 365.15L362.22 367.25L360.12 369.35ZM366.2 364.4L368.3 362.3L370.4 364.4L368.3 366.5ZM374.38 362.25L376.48 360.15L378.58 362.25L376.48 364.35ZM382.56 359.4L384.66 357.3L386.76 359.4L384.66 361.5ZM390.74 363.4L392.84 361.3L394.94 363.4L392.84 365.5ZM398.91 373.4L401.01 371.3L403.11 373.4L401.01 375.5ZM407.09 369.4L409.19 367.3L411.29 369.4L409.19 371.5ZM415.27 362.1L417.37 360L419.47 362.1L417.37 364.2ZM423.45 358.4L425.55 356.3L427.65 358.4L425.55 360.5ZM431.63 357.5L433.73 355.4L435.83 357.5L433.73 359.6ZM439.8 351.5L441.9 349.4L444 351.5L441.9 353.6ZM447.98 351.25L450.08 349.15L452.18 351.25L450.08 353.35ZM456.16 348.1L458.26 346L460.36 348.1L458.26 350.2ZM464.34 345.6L466.44 343.5L468.54 345.6L466.44 347.7ZM472.52 344.4L474.62 342.3L476.72 344.4L474.62 346.5ZM480.69 345.4L482.79 343.3L484.89 345.4L482.79 347.5ZM488.87 345.4L490.97 343.3L493.07 345.4L490.97 347.5ZM497.05 347.5L499.15 345.4L501.25 347.5L499.15 349.6ZM505.23 355.25L507.33 353.15L509.43 355.25L507.33 357.35ZM513.41 352.5L515.51 350.4L517.61 352.5L515.51 354.6ZM521.58 339.4L523.68 337.3L525.78 339.4L523.68 341.5ZM529.76 329.4L531.86 327.3L533.96 329.4L531.86 331.5ZM537.94 335.4L540.04 333.3L542.14 335.4L540.04 337.5ZM546.12 337.25L548.22 335.15L550.32 337.25L548.22 339.35ZM554.3 343.4L556.4 341.3L558.5 343.4L556.4 345.5ZM562.47 333.5L564.57 331.4L566.67 333.5L564.57 335.6ZM570.65 337.25L572.75 335.15L574.85 337.25L572.75 339.35ZM578.83 342.5L580.93 340.4L583.03 342.5L580.93 344.6ZM587.01 351.25L589.11 349.15L591.21 351.25L589.11 353.35ZM595.19 347.5L597.29 345.4L599.39 347.5L597.29 349.6ZM603.36 351.25L605.46 349.15L607.56 351.25L605.46 353.35ZM611.54 348.5L613.64 346.4L615.74 348.5L613.64 350.6ZM619.72 355.4L621.82 353.3L623.92 355.4L621.82 357.5ZM627.9 364.4L630 362.3L632.1 364.4L630 366.5ZM636.08 378.4L638.18 376.3L640.28 378.4L638.18 380.5ZM644.25 374.4L646.35 372.3L648.45 374.4L646.35 376.5ZM652.43 385.4L654.53 383.3L656.63 385.4L654.53 387.5ZM660.61 380.6L662.71 378.5L664.81 380.6L662.71 382.7ZM668.79 378.4L670.89 376.3L672.99 378.4L670.89 380.5ZM676.97 386.5L679.07 384.4L681.17 386.5L679.07 388.6ZM685.14 386.5L687.24 384.4L689.34 386.5L687.24 388.6ZM693.32 396.25L695.42 394.15L697.52 396.25L695.42 398.35ZM701.5 382.25L703.6 380.15L705.7 382.25L703.6 384.35ZM709.68 375.4L711.78 373.3L713.88 375.4L711.78 377.5ZM717.86 383.4L719.96 381.3L722.06 383.4L719.96 385.5ZM726.03 384.4L728.13 382.3L730.23 384.4L728.13 386.5ZM734.21 390.4L736.31 388.3L738.41 390.4L736.31 392.5ZM742.39 383.4L744.49 381.3L746.59 383.4L744.49 385.5ZM750.57 373.4L752.67 371.3L754.77 373.4L752.67 375.5ZM758.75 375.4L760.85 373.3L762.95 375.4L760.85 377.5ZM766.92 376.5L769.02 374.4L771.12 376.5L769.02 378.6ZM775.1 372.5L777.2 370.4L779.3 372.5L777.2 374.6ZM783.28 373.4L785.38 371.3L787.48 373.4L785.38 375.5ZM791.46 357.1L793.56 355L795.66 357.1L793.56 359.2ZM799.64 361.5L801.74 359.4L803.84 361.5L801.74 363.6ZM807.81 371.5L809.91 369.4L812.01 371.5L809.91 373.6ZM815.99 390.4L818.09 388.3L820.19 390.4L818.09 392.5ZM824.17 390.4L826.27 388.3L828.37 390.4L826.27 392.5ZM832.35 386.5L834.45 384.4L836.55 386.5L834.45 388.6ZM840.53 411.5L842.63 409.4L844.73 411.5L842.63 413.6ZM848.7 432.5L850.8 430.4L852.9 432.5L850.8 434.6ZM856.88 416.5L858.98 414.4L861.08 416.5L858.98 418.6ZM865.06 406.5L867.16 404.4L869.26 406.5L867.16 408.6ZM873.24 412.5L875.34 410.4L877.44 412.5L875.34 414.6ZM881.42 426.25L883.52 424.15L885.62 426.25L883.52 428.35ZM889.59 461.25L891.69 459.15L893.79 461.25L891.69 463.35ZM897.77 555.25L899.87 553.15L901.97 555.25L899.87 557.35ZM905.95 535.4L908.05 533.3L910.15 535.4L908.05 537.5ZM914.13 537.25L916.23 535.15L918.33 537.25L916.23 539.35ZM922.31 590.25L924.41 588.15L926.51 590.25L924.41 592.35ZM930.48 567.5L932.58 565.4L934.68 567.5L932.58 569.6ZM938.66 585.4L940.76 583.3L942.86 585.4L940.76 587.5ZM946.84 545.25L948.94 543.15L951.04 545.25L948.94 547.35ZM955.02 568.4L957.12 566.3L959.22 568.4L957.12 570.5ZM963.2 565.25L965.3 563.15L967.4 565.25L965.3 567.35ZM971.37 580.4L973.47 578.3L975.57 580.4L973.47 582.5ZM979.55 577.5L981.65 575.4L983.75 577.5L981.65 579.6ZM987.73 515.4L989.83 513.3L991.93 515.4L989.83 517.5ZM995.91 512.25L998.01 510.15L1000.11 512.25L998.01 514.35ZM1004.09 511.5L1006.19 509.4L1008.29 511.5L1006.19 513.6ZM1012.26 515.4L1014.36 513.3L1016.46 515.4L1014.36 517.5ZM1020.44 503.5L1022.54 501.4L1024.64 503.5L1022.54 505.6ZM1028.62 482.25L1030.72 480.15L1032.82 482.25L1030.72 484.35ZM1036.8 494.5L1038.9 492.4L1041 494.5L1038.9 496.6ZM1044.98 483.4L1047.08 481.3L1049.18 483.4L1047.08 485.5ZM1053.15 491.25L1055.25 489.15L1057.35 491.25L1055.25 493.35ZM1061.33 510.4L1063.43 508.3L1065.53 510.4L1063.43 512.5ZM1069.51 503.5L1071.61 501.4L1073.71 503.5L1071.61 505.6ZM1077.69 504.4L1079.79 502.3L1081.89 504.4L1079.79 506.5ZM1085.87 488.5L1087.97 486.4L1090.07 488.5L1087.97 490.6ZM1094.04 495.4L1096.14 493.3L1098.24 495.4L1096.14 497.5ZM1102.22 522.25L1104.32 520.15L1106.42 522.25L1104.32 524.35ZM1110.4 538.5L1112.5 536.4L1114.6 538.5L1112.5 540.6ZM1118.58 513.5L1120.68 511.4L1122.78 513.5L1120.68 515.6ZM1126.76 516.5L1128.86 514.4L1130.96 516.5L1128.86 518.6ZM1134.93 544L1137.03 541.9L1139.13 544L1137.03 546.1ZM1143.11 530L1145.21 527.9L1147.31 530L1145.21 532.1ZM1151.29 520.4L1153.39 518.3L1155.49 520.4L1153.39 522.5ZM1159.47 523.4L1161.57 521.3L1163.67 523.4L1161.57 525.5ZM1167.65 522.25L1169.75 520.15L1171.85 522.25L1169.75 524.35ZM1175.82 504.4L1177.92 502.3L1180.02 504.4L1177.92 506.5ZM1184 480.4L1186.1 478.3L1188.2 480.4L1186.1 482.5ZM1192.18 481.5L1194.28 479.4L1196.38 481.5L1194.28 483.6ZM1200.36 509.4L1202.46 507.3L1204.56 509.4L1202.46 511.5ZM1208.54 485.3L1210.64 483.2L1212.74 485.3L1210.64 487.4ZM1216.71 497.5L1218.81 495.4L1220.91 497.5L1218.81 499.6ZM1224.89 486.25L1226.99 484.15L1229.09 486.25L1226.99 488.35Z" fill="#006400"/><path d="M88.15 384.4L90.25 382.3L92.35 384.4L90.25 386.5ZM96.33 384.4L98.43 382.3L100.53 384.4L98.43 386.5ZM104.51 385.25L106.61 383.15L108.71 385.25L106.61 387.35ZM112.68 377.5L114.78 375.4L116.88 377.5L114.78 379.6ZM120.86 373.5L122.96 371.4L125.06 373.5L122.96 375.6ZM129.04 365.4L131.14 363.3L133.24 365.4L131.14 367.5ZM137.22 362.5L139.32 360.4L141.42 362.5L139.32 364.6ZM145.4 353.5L147.5 351.4L149.6 353.5L147.5 355.6ZM153.57 357.25L155.67 355.15L157.77 357.25L155.67 359.35ZM161.75 357.25L163.85 355.15L165.95 357.25L163.85 359.35ZM169.93 366.5L172.03 364.4L174.13 366.5L172.03 368.6ZM178.11 365.25L180.21 363.15L182.31 365.25L180.21 367.35ZM186.29 353.5L188.39 351.4L190.49 353.5L188.39 355.6ZM194.46 349.4L196.56 347.3L198.66 349.4L196.56 351.5ZM202.64 351.25L204.74 349.15L206.84 351.25L204.74 353.35ZM210.82 347.25L212.92 345.15L215.02 347.25L212.92 349.35ZM219 348.1L221.1 346L223.2 348.1L221.1 350.2ZM227.18 350L229.28 347.9L231.38 350L229.28 352.1ZM235.35 345.4L237.45 343.3L239.55 345.4L237.45 347.5ZM243.53 346.25L245.63 344.15L247.73 346.25L245.63 348.35ZM251.71 343.9L253.81 341.8L255.91 343.9L253.81 346ZM259.89 342.25L261.99 340.15L264.09 342.25L261.99 344.35ZM268.07 342.25L270.17 340.15L272.27 342.25L270.17 344.35ZM276.24 341.25L278.34 339.15L280.44 341.25L278.34 343.35ZM284.42 345.4L286.52 343.3L288.62 345.4L286.52 347.5ZM292.6 346.25L294.7 344.15L296.8 346.25L294.7 348.35ZM300.78 341.25L302.88 339.15L304.98 341.25L302.88 343.35ZM308.96 347.25L311.06 345.15L313.16 347.25L311.06 349.35ZM317.13 349.4L319.23 347.3L321.33 349.4L319.23 351.5ZM325.31 350.25L327.41 348.15L329.51 350.25L327.41 352.35ZM333.49 351.5L335.59 349.4L337.69 351.5L335.59 353.6ZM341.67 353.4L343.77 351.3L345.87 353.4L343.77 355.5ZM349.85 356.25L351.95 354.15L354.05 356.25L351.95 358.35ZM358.02 363.5L360.12 361.4L362.22 363.5L360.12 365.6ZM366.2 360.25L368.3 358.15L370.4 360.25L368.3 362.35ZM374.38 358.1L376.48 356L378.58 358.1L376.48 360.2ZM382.56 355.25L384.66 353.15L386.76 355.25L384.66 357.35ZM390.74 359.4L392.84 357.3L394.94 359.4L392.84 361.5ZM398.91 368.4L401.01 366.3L403.11 368.4L401.01 370.5ZM407.09 365L409.19 362.9L411.29 365L409.19 367.1ZM415.27 358.25L417.37 356.15L419.47 358.25L417.37 360.35ZM423.45 353.5L425.55 351.4L427.65 353.5L425.55 355.6ZM431.63 352.25L433.73 350.15L435.83 352.25L433.73 354.35ZM439.8 346.5L441.9 344.4L444 346.5L441.9 348.6ZM447.98 346.5L450.08 344.4L452.18 346.5L450.08 348.6ZM456.16 344.4L458.26 342.3L460.36 344.4L458.26 346.5ZM464.34 341.25L466.44 339.15L468.54 341.25L466.44 343.35ZM472.52 341.25L474.62 339.15L476.72 341.25L474.62 343.35ZM480.69 342.5L482.79 340.4L484.89 342.5L482.79 344.6ZM488.87 342.5L490.97 340.4L493.07 342.5L490.97 344.6ZM497.05 344.4L499.15 342.3L501.25 344.4L499.15 346.5ZM505.23 351.25L507.33 349.15L509.43 351.25L507.33 353.35ZM513.41 347.25L515.51 345.15L517.61 347.25L515.51 349.35ZM521.58 335.4L523.68 333.3L525.78 335.4L523.68 337.5ZM529.76 323.4L531.86 321.3L533.96 323.4L531.86 325.5ZM537.94 330.4L540.04 328.3L542.14 330.4L540.04 332.5ZM546.12 332.5L548.22 330.4L550.32 332.5L548.22 334.6ZM554.3 338.5L556.4 336.4L558.5 338.5L556.4 340.6ZM562.47 330.4L564.57 328.3L566.67 330.4L564.57 332.5ZM570.65 333.4L572.75 331.3L574.85 333.4L572.75 335.5ZM578.83 338.5L580.93 336.4L583.03 338.5L580.93 340.6ZM587.01 346.5L589.11 344.4L591.21 346.5L589.11 348.6ZM595.19 343.4L597.29 341.3L599.39 343.4L597.29 345.5ZM603.36 346.5L605.46 344.4L607.56 346.5L605.46 348.6ZM611.54 344.4L613.64 342.3L615.74 344.4L613.64 346.5ZM619.72 352.5L621.82 350.4L623.92 352.5L621.82 354.6ZM627.9 359.4L630 357.3L632.1 359.4L630 361.5ZM636.08 373.5L638.18 371.4L640.28 373.5L638.18 375.6ZM644.25 369.4L646.35 367.3L648.45 369.4L646.35 371.5ZM652.43 379.6L654.53 377.5L656.63 379.6L654.53 381.7ZM660.61 374.4L662.71 372.3L664.81 374.4L662.71 376.5ZM668.79 374.4L670.89 372.3L672.99 374.4L670.89 376.5ZM676.97 382.25L679.07 380.15L681.17 382.25L679.07 384.35ZM685.14 381.5L687.24 379.4L689.34 381.5L687.24 383.6ZM693.32 391.5L695.42 389.4L697.52 391.5L695.42 393.6ZM701.5 377.5L703.6 375.4L705.7 377.5L703.6 379.6ZM709.68 369.4L711.78 367.3L713.88 369.4L711.78 371.5ZM717.86 376.5L719.96 374.4L722.06 376.5L719.96 378.6ZM726.03 378.4L728.13 376.3L730.23 378.4L728.13 380.5ZM734.21 384.6L736.31 382.5L738.41 384.6L736.31 386.7ZM742.39 378.4L744.49 376.3L746.59 378.4L744.49 380.5ZM750.57 368.5L752.67 366.4L754.77 368.5L752.67 370.6ZM758.75 370.4L760.85 368.3L762.95 370.4L760.85 372.5ZM766.92 372.5L769.02 370.4L771.12 372.5L769.02 374.6ZM775.1 367.25L777.2 365.15L779.3 367.25L777.2 369.35ZM783.28 368.5L785.38 366.4L787.48 368.5L785.38 370.6ZM791.46 352.5L793.56 350.4L795.66 352.5L793.56 354.6ZM799.64 356.5L801.74 354.4L803.84 356.5L801.74 358.6ZM807.81 365.6L809.91 363.5L812.01 365.6L809.91 367.7ZM815.99 383.5L818.09 381.4L820.19 383.5L818.09 385.6ZM824.17 382.75L826.27 380.65L828.37 382.75L826.27 384.85ZM832.35 377.5L834.45 375.4L836.55 377.5L834.45 379.6ZM840.53 400.6L842.63 398.5L844.73 400.6L842.63 402.7ZM848.7 421.5L850.8 419.4L852.9 421.5L850.8 423.6ZM856.88 404.4L858.98 402.3L861.08 404.4L858.98 406.5ZM865.06 395.4L867.16 393.3L869.26 395.4L867.16 397.5ZM873.24 402.25L875.34 400.15L877.44 402.25L875.34 404.35ZM881.42 416.4L883.52 414.3L885.62 416.4L883.52 418.5ZM889.59 450.4L891.69 448.3L893.79 450.4L891.69 452.5ZM897.77 531.25L899.87 529.15L901.97 531.25L899.87 533.35ZM905.95 506.25L908.05 504.15L910.15 506.25L908.05 508.35ZM914.13 504.4L916.23 502.3L918.33 504.4L916.23 506.5ZM922.31 551.25L924.41 549.15L926.51 551.25L924.41 553.35ZM930.48 535.4L932.58 533.3L934.68 535.4L932.58 537.5ZM938.66 556.25L940.76 554.15L942.86 556.25L940.76 558.35ZM946.84 522.5L948.94 520.4L951.04 522.5L948.94 524.6ZM955.02 545.25L957.12 543.15L959.22 545.25L957.12 547.35ZM963.2 547.25L965.3 545.15L967.4 547.25L965.3 549.35ZM971.37 558.4L973.47 556.3L975.57 558.4L973.47 560.5ZM979.55 555.4L981.65 553.3L983.75 555.4L981.65 557.5ZM987.73 494.4L989.83 492.3L991.93 494.4L989.83 496.5ZM995.91 488.4L998.01 486.3L1000.11 488.4L998.01 490.5ZM1004.09 491.5L1006.19 489.4L1008.29 491.5L1006.19 493.6ZM1012.26 497.25L1014.36 495.15L1016.46 497.25L1014.36 499.35ZM1020.44 487.5L1022.54 485.4L1024.64 487.5L1022.54 489.6ZM1028.62 472.25L1030.72 470.15L1032.82 472.25L1030.72 474.35ZM1036.8 484.5L1038.9 482.4L1041 484.5L1038.9 486.6ZM1044.98 469.4L1047.08 467.3L1049.18 469.4L1047.08 471.5ZM1053.15 478.5L1055.25 476.4L1057.35 478.5L1055.25 480.6ZM1061.33 495.4L1063.43 493.3L1065.53 495.4L1063.43 497.5ZM1069.51 487.25L1071.61 485.15L1073.71 487.25L1071.61 489.35ZM1077.69 491.25L1079.79 489.15L1081.89 491.25L1079.79 493.35ZM1085.87 475.4L1087.97 473.3L1090.07 475.4L1087.97 477.5ZM1094.04 483.4L1096.14 481.3L1098.24 483.4L1096.14 485.5ZM1102.22 509.4L1104.32 507.3L1106.42 509.4L1104.32 511.5ZM1110.4 523.4L1112.5 521.3L1114.6 523.4L1112.5 525.5ZM1118.58 501.25L1120.68 499.15L1122.78 501.25L1120.68 503.35ZM1126.76 504.4L1128.86 502.3L1130.96 504.4L1128.86 506.5ZM1134.93 531.5L1137.03 529.4L1139.13 531.5L1137.03 533.6ZM1143.11 519.4L1145.21 517.3L1147.31 519.4L1145.21 521.5ZM1151.29 509.4L1153.39 507.3L1155.49 509.4L1153.39 511.5ZM1159.47 511.25L1161.57 509.15L1163.67 511.25L1161.57 513.35ZM1167.65 510.4L1169.75 508.3L1171.85 510.4L1169.75 512.5ZM1175.82 490.4L1177.92 488.3L1180.02 490.4L1177.92 492.5ZM1184 466.25L1186.1 464.15L1188.2 466.25L1186.1 468.35ZM1192.18 467.4L1194.28 465.3L1196.38 467.4L1194.28 469.5ZM1200.36 494.4L1202.46 492.3L1204.56 494.4L1202.46 496.5ZM1208.54 472.5L1210.64 470.4L1212.74 472.5L1210.64 474.6ZM1216.71 485.4L1218.81 483.3L1220.91 485.4L1218.81 487.5ZM1224.89 475.6L1226.99 473.5L1229.09 475.6L1226.99 477.7Z" fill="#ff0000"/><rect x="35" y="597" width="1329" height="55" fill="#000"/><rect x="35" y="597" width="1329" height="1" fill="#4a4a4a"/><rect x="85.5" y="598" width="33" height="21" fill="url(#hr)"/><line x1="118.5" y1="599.5" x2="126.5" y2="599.5" stroke="#ffff00" stroke-width="1" shape-rendering="crispEdges"/><line x1="118.5" y1="607.5" x2="126.5" y2="607.5" stroke="#ffff00" stroke-width="1" shape-rendering="crispEdges"/><line x1="118.5" y1="615.5" x2="126.5" y2="615.5" stroke="#ffff00" stroke-width="1" shape-rendering="crispEdges"/><rect x="126.5" y="598" width="148" height="21" fill="url(#hg)"/><line x1="274.5" y1="599.5" x2="355.5" y2="599.5" stroke="#ffff00" stroke-width="1" shape-rendering="crispEdges"/><line x1="274.5" y1="607.5" x2="355.5" y2="607.5" stroke="#ffff00" stroke-width="1" shape-rendering="crispEdges"/><line x1="274.5" y1="615.5" x2="355.5" y2="615.5" stroke="#ffff00" stroke-width="1" shape-rendering="crispEdges"/><rect x="355.5" y="598" width="9" height="21" fill="url(#hr)"/><line x1="364.5" y1="599.5" x2="396.5" y2="599.5" stroke="#ffff00" stroke-width="1" shape-rendering="crispEdges"/><line x1="364.5" y1="607.5" x2="396.5" y2="607.5" stroke="#ffff00" stroke-width="1" shape-rendering="crispEdges"/><line x1="364.5" y1="615.5" x2="396.5" y2="615.5" stroke="#ffff00" stroke-width="1" shape-rendering="crispEdges"/><rect x="396.5" y="598" width="25" height="21" fill="url(#hr)"/><rect x="421.5" y="598" width="155" height="21" fill="url(#hg)"/><line x1="576.5" y1="599.5" x2="584.5" y2="599.5" stroke="#ffff00" stroke-width="1" shape-rendering="crispEdges"/><line x1="576.5" y1="607.5" x2="584.5" y2="607.5" stroke="#ffff00" stroke-width="1" shape-rendering="crispEdges"/><line x1="576.5" y1="615.5" x2="584.5" y2="615.5" stroke="#ffff00" stroke-width="1" shape-rendering="crispEdges"/><rect x="584.5" y="598" width="9" height="21" fill="url(#hr)"/><line x1="593.5" y1="599.5" x2="601.5" y2="599.5" stroke="#ffff00" stroke-width="1" shape-rendering="crispEdges"/><line x1="593.5" y1="607.5" x2="601.5" y2="607.5" stroke="#ffff00" stroke-width="1" shape-rendering="crispEdges"/><line x1="593.5" y1="615.5" x2="601.5" y2="615.5" stroke="#ffff00" stroke-width="1" shape-rendering="crispEdges"/><rect x="601.5" y="598" width="139" height="21" fill="url(#hr)"/><line x1="740.5" y1="599.5" x2="781.5" y2="599.5" stroke="#ffff00" stroke-width="1" shape-rendering="crispEdges"/><line x1="740.5" y1="607.5" x2="781.5" y2="607.5" stroke="#ffff00" stroke-width="1" shape-rendering="crispEdges"/><line x1="740.5" y1="615.5" x2="781.5" y2="615.5" stroke="#ffff00" stroke-width="1" shape-rendering="crispEdges"/><rect x="781.5" y="598" width="24" height="21" fill="url(#hg)"/><line x1="805.5" y1="599.5" x2="822.5" y2="599.5" stroke="#ffff00" stroke-width="1" shape-rendering="crispEdges"/><line x1="805.5" y1="607.5" x2="822.5" y2="607.5" stroke="#ffff00" stroke-width="1" shape-rendering="crispEdges"/><line x1="805.5" y1="615.5" x2="822.5" y2="615.5" stroke="#ffff00" stroke-width="1" shape-rendering="crispEdges"/><rect x="822.5" y="598" width="155" height="21" fill="url(#hr)"/><line x1="977.5" y1="599.5" x2="1026.5" y2="599.5" stroke="#ffff00" stroke-width="1" shape-rendering="crispEdges"/><line x1="977.5" y1="607.5" x2="1026.5" y2="607.5" stroke="#ffff00" stroke-width="1" shape-rendering="crispEdges"/><line x1="977.5" y1="615.5" x2="1026.5" y2="615.5" stroke="#ffff00" stroke-width="1" shape-rendering="crispEdges"/><rect x="1026.5" y="598" width="8" height="21" fill="url(#hg)"/><line x1="1034.5" y1="599.5" x2="1067.5" y2="599.5" stroke="#ffff00" stroke-width="1" shape-rendering="crispEdges"/><line x1="1034.5" y1="607.5" x2="1067.5" y2="607.5" stroke="#ffff00" stroke-width="1" shape-rendering="crispEdges"/><line x1="1034.5" y1="615.5" x2="1067.5" y2="615.5" stroke="#ffff00" stroke-width="1" shape-rendering="crispEdges"/><rect x="1067.5" y="598" width="16" height="21" fill="url(#hr)"/><line x1="1083.5" y1="599.5" x2="1091.5" y2="599.5" stroke="#ffff00" stroke-width="1" shape-rendering="crispEdges"/><line x1="1083.5" y1="607.5" x2="1091.5" y2="607.5" stroke="#ffff00" stroke-width="1" shape-rendering="crispEdges"/><line x1="1083.5" y1="615.5" x2="1091.5" y2="615.5" stroke="#ffff00" stroke-width="1" shape-rendering="crispEdges"/><rect x="1091.5" y="598" width="58" height="21" fill="url(#hr)"/><line x1="1149.5" y1="599.5" x2="1181.5" y2="599.5" stroke="#ffff00" stroke-width="1" shape-rendering="crispEdges"/><line x1="1149.5" y1="607.5" x2="1181.5" y2="607.5" stroke="#ffff00" stroke-width="1" shape-rendering="crispEdges"/><line x1="1149.5" y1="615.5" x2="1181.5" y2="615.5" stroke="#ffff00" stroke-width="1" shape-rendering="crispEdges"/><rect x="1181.5" y="598" width="33" height="21" fill="url(#hg)"/><line x1="1214.5" y1="599.5" x2="1222.5" y2="599.5" stroke="#ffff00" stroke-width="1" shape-rendering="crispEdges"/><line x1="1214.5" y1="607.5" x2="1222.5" y2="607.5" stroke="#ffff00" stroke-width="1" shape-rendering="crispEdges"/><line x1="1214.5" y1="615.5" x2="1222.5" y2="615.5" stroke="#ffff00" stroke-width="1" shape-rendering="crispEdges"/><rect x="1222.5" y="598" width="12.5" height="21" fill="url(#hg)"/><text x="200.5" y="613.7" text-anchor="middle" font-family="Liberation Sans, Arial, sans-serif" font-size="15.6" fill="#fff" textLength="44" lengthAdjust="spacingAndGlyphs">Bullish</text><text x="315" y="613.7" text-anchor="middle" font-family="Liberation Sans, Arial, sans-serif" font-size="15.6" fill="#fff" textLength="49" lengthAdjust="spacingAndGlyphs">Neutral</text><text x="499" y="613.7" text-anchor="middle" font-family="Liberation Sans, Arial, sans-serif" font-size="15.6" fill="#fff" textLength="44" lengthAdjust="spacingAndGlyphs">Bullish</text><text x="671" y="613.7" text-anchor="middle" font-family="Liberation Sans, Arial, sans-serif" font-size="15.6" fill="#fff" textLength="55" lengthAdjust="spacingAndGlyphs">Bearish</text><text x="900" y="613.7" text-anchor="middle" font-family="Liberation Sans, Arial, sans-serif" font-size="15.6" fill="#fff" textLength="55" lengthAdjust="spacingAndGlyphs">Bearish</text><text x="1120.5" y="613.7" text-anchor="middle" font-family="Liberation Sans, Arial, sans-serif" font-size="15.6" fill="#fff" textLength="55" lengthAdjust="spacingAndGlyphs">Bearish</text><g shape-rendering="crispEdges" fill="#fff"><rect x="85" y="619" width="1229" height="1"/><rect x="85" y="635" width="1229" height="1"/><rect x="85" y="651" width="1229" height="1" fill="#5a5a5a"/><rect x="85" y="619" width="1" height="33"/><rect x="1313" y="619" width="1" height="33"/><rect x="106" y="620" width="1" height="15"/><rect x="147" y="620" width="1" height="15"/><rect x="188" y="620" width="1" height="15"/><rect x="229" y="620" width="1" height="15"/><rect x="269" y="620" width="1" height="15"/><rect x="310" y="620" width="1" height="15"/><rect x="351" y="620" width="1" height="15"/><rect x="392" y="620" width="1" height="15"/><rect x="433" y="620" width="1" height="15"/><rect x="474" y="620" width="1" height="15"/><rect x="498" y="620" width="1" height="15"/><rect x="531" y="620" width="1" height="15"/><rect x="572" y="620" width="1" height="15"/><rect x="613" y="620" width="1" height="15"/><rect x="654" y="620" width="1" height="15"/><rect x="695" y="620" width="1" height="15"/><rect x="736" y="620" width="1" height="15"/><rect x="777" y="620" width="1" height="15"/><rect x="817" y="620" width="1" height="15"/><rect x="858" y="620" width="1" height="15"/><rect x="899" y="620" width="1" height="15"/><rect x="940" y="620" width="1" height="15"/><rect x="981" y="620" width="1" height="15"/><rect x="1022" y="620" width="1" height="15"/><rect x="1063" y="620" width="1" height="15"/><rect x="1095" y="620" width="1" height="15"/><rect x="1128" y="620" width="1" height="15"/><rect x="1169" y="620" width="1" height="15"/><rect x="1202" y="620" width="1" height="15"/><rect x="1243" y="620" width="1" height="15"/><rect x="1284" y="620" width="1" height="15"/><rect x="180" y="620" width="1" height="31"/><rect x="351" y="620" width="1" height="31"/><rect x="515" y="620" width="1" height="31"/><rect x="695" y="620" width="1" height="31"/><rect x="858" y="620" width="1" height="31"/><rect x="1038" y="620" width="1" height="31"/><rect x="1202" y="620" width="1" height="31"/></g><text x="109" y="631.8" font-family="Liberation Sans, Arial, sans-serif" font-size="12" fill="#fff">21</text><text x="150" y="631.8" font-family="Liberation Sans, Arial, sans-serif" font-size="12" fill="#fff">28</text><text x="191" y="631.8" font-family="Liberation Sans, Arial, sans-serif" font-size="12" fill="#fff">4</text><text x="232" y="631.8" font-family="Liberation Sans, Arial, sans-serif" font-size="12" fill="#fff">11</text><text x="272" y="631.8" font-family="Liberation Sans, Arial, sans-serif" font-size="12" fill="#fff">18</text><text x="313" y="631.8" font-family="Liberation Sans, Arial, sans-serif" font-size="12" fill="#fff">25</text><text x="354" y="631.8" font-family="Liberation Sans, Arial, sans-serif" font-size="12" fill="#fff">2</text><text x="395" y="631.8" font-family="Liberation Sans, Arial, sans-serif" font-size="12" fill="#fff">9</text><text x="436" y="631.8" font-family="Liberation Sans, Arial, sans-serif" font-size="12" fill="#fff">16</text><text x="477" y="631.8" font-family="Liberation Sans, Arial, sans-serif" font-size="12" fill="#fff">23</text><text x="501" y="631.8" font-family="Liberation Sans, Arial, sans-serif" font-size="12" fill="#fff">30</text><text x="534" y="631.8" font-family="Liberation Sans, Arial, sans-serif" font-size="12" fill="#fff">6</text><text x="575" y="631.8" font-family="Liberation Sans, Arial, sans-serif" font-size="12" fill="#fff">13</text><text x="616" y="631.8" font-family="Liberation Sans, Arial, sans-serif" font-size="12" fill="#fff">20</text><text x="657" y="631.8" font-family="Liberation Sans, Arial, sans-serif" font-size="12" fill="#fff">27</text><text x="698" y="631.8" font-family="Liberation Sans, Arial, sans-serif" font-size="12" fill="#fff">3</text><text x="739" y="631.8" font-family="Liberation Sans, Arial, sans-serif" font-size="12" fill="#fff">10</text><text x="780" y="631.8" font-family="Liberation Sans, Arial, sans-serif" font-size="12" fill="#fff">17</text><text x="820" y="631.8" font-family="Liberation Sans, Arial, sans-serif" font-size="12" fill="#fff">24</text><text x="861" y="631.8" font-family="Liberation Sans, Arial, sans-serif" font-size="12" fill="#fff">2</text><text x="902" y="631.8" font-family="Liberation Sans, Arial, sans-serif" font-size="12" fill="#fff">9</text><text x="943" y="631.8" font-family="Liberation Sans, Arial, sans-serif" font-size="12" fill="#fff">16</text><text x="984" y="631.8" font-family="Liberation Sans, Arial, sans-serif" font-size="12" fill="#fff">23</text><text x="1025" y="631.8" font-family="Liberation Sans, Arial, sans-serif" font-size="12" fill="#fff">30</text><text x="1066" y="631.8" font-family="Liberation Sans, Arial, sans-serif" font-size="12" fill="#fff">6</text><text x="1098" y="631.8" font-family="Liberation Sans, Arial, sans-serif" font-size="12" fill="#fff">14</text><text x="1131" y="631.8" font-family="Liberation Sans, Arial, sans-serif" font-size="12" fill="#fff">20</text><text x="1172" y="631.8" font-family="Liberation Sans, Arial, sans-serif" font-size="12" fill="#fff">27</text><text x="1205" y="631.8" font-family="Liberation Sans, Arial, sans-serif" font-size="12" fill="#fff">4</text><text x="1246" y="631.8" font-family="Liberation Sans, Arial, sans-serif" font-size="12" fill="#fff">11</text><text x="1287" y="631.8" font-family="Liberation Sans, Arial, sans-serif" font-size="12" fill="#fff">18</text><text x="183" y="647.5" font-family="Liberation Sans, Arial, sans-serif" font-size="12.3" fill="#fff">November</text><text x="354" y="647.5" font-family="Liberation Sans, Arial, sans-serif" font-size="12.3" fill="#fff">December</text><text x="518" y="647.5" font-family="Liberation Sans, Arial, sans-serif" font-size="12.3" fill="#fff">2020</text><text x="698" y="647.5" font-family="Liberation Sans, Arial, sans-serif" font-size="12.3" fill="#fff">February</text><text x="861" y="647.5" font-family="Liberation Sans, Arial, sans-serif" font-size="12.3" fill="#fff">March</text><text x="1041" y="647.5" font-family="Liberation Sans, Arial, sans-serif" font-size="12.3" fill="#fff">April</text><text x="1205" y="647.5" font-family="Liberation Sans, Arial, sans-serif" font-size="12.3" fill="#fff">May</text><rect x="1315" y="620" width="49" height="32" fill="#eaeaea"/><circle cx="1337.5" cy="634.5" r="8" fill="none" stroke="#2e6e2e" stroke-width="1.3"/><circle cx="1334.5" cy="632" r="1.1" fill="#2e6e2e"/><circle cx="1340.5" cy="632" r="1.1" fill="#2e6e2e"/><path d="M1333 636.5Q1337.5 641.5 1342 636.5" stroke="#2e6e2e" stroke-width="1.2" fill="none"/><rect x="34" y="652" width="1332" height="1" fill="#f4f4f4"/><defs><pattern id="dots" width="2" height="2" patternUnits="userSpaceOnUse"><rect width="2" height="2" fill="#fbfbfb"/><rect width="1" height="1" fill="#f0f0f0"/><rect x="1" y="1" width="1" height="1" fill="#f0f0f0"/></pattern></defs><rect x="35" y="653" width="1116" height="20" fill="url(#dots)"/><rect x="35" y="653" width="17" height="20" fill="#f0f0f0"/><rect x="35" y="653" width="17" height="1" fill="#fff" shape-rendering="crispEdges"/><rect x="35" y="653" width="1" height="20" fill="#fff" shape-rendering="crispEdges"/><rect x="51" y="653" width="1" height="20" fill="#6a6a6a" shape-rendering="crispEdges"/><rect x="35" y="672" width="17" height="1" fill="#6a6a6a" shape-rendering="crispEdges"/><rect x="50" y="654" width="1" height="18" fill="#a4a4a4" shape-rendering="crispEdges"/><rect x="36" y="671" width="15" height="1" fill="#a4a4a4" shape-rendering="crispEdges"/><path d="M46 658V668L41 663Z" fill="#909090"/><rect x="1010" y="653" width="122" height="20" fill="#f0f0f0"/><rect x="1010" y="653" width="122" height="1" fill="#fff" shape-rendering="crispEdges"/><rect x="1010" y="653" width="1" height="20" fill="#fff" shape-rendering="crispEdges"/><rect x="1131" y="653" width="1" height="20" fill="#6a6a6a" shape-rendering="crispEdges"/><rect x="1010" y="672" width="122" height="1" fill="#6a6a6a" shape-rendering="crispEdges"/><rect x="1130" y="654" width="1" height="18" fill="#a4a4a4" shape-rendering="crispEdges"/><rect x="1011" y="671" width="120" height="1" fill="#a4a4a4" shape-rendering="crispEdges"/><rect x="1133" y="653" width="17" height="20" fill="#f0f0f0"/><rect x="1133" y="653" width="17" height="1" fill="#fff" shape-rendering="crispEdges"/><rect x="1133" y="653" width="1" height="20" fill="#fff" shape-rendering="crispEdges"/><rect x="1149" y="653" width="1" height="20" fill="#6a6a6a" shape-rendering="crispEdges"/><rect x="1133" y="672" width="17" height="1" fill="#6a6a6a" shape-rendering="crispEdges"/><rect x="1148" y="654" width="1" height="18" fill="#a4a4a4" shape-rendering="crispEdges"/><rect x="1134" y="671" width="15" height="1" fill="#a4a4a4" shape-rendering="crispEdges"/><path d="M1139 658V668L1144 663Z" fill="#909090"/><rect x="1150" y="653" width="216" height="21" fill="#ececec"/><rect x="1152" y="655" width="1" height="16" fill="#a8a8a8" shape-rendering="crispEdges"/><rect x="1153" y="655" width="1" height="16" fill="#fdfdfd" shape-rendering="crispEdges"/><path d="M1160.500 662A5 5 0 0 1 1169 659" stroke="#4a4a4a" stroke-width="2.400" fill="none"/><path d="M1166.500 656L1171.500 657.500L1168.500 662Z" fill="#4a4a4a"/><path d="M1170.500 664A5 5 0 0 1 1162 667" stroke="#4a4a4a" stroke-width="2.400" fill="none"/><path d="M1164.500 670L1159.500 668.500L1162.500 664Z" fill="#4a4a4a"/><text x="1187.5" y="668" font-family="Liberation Sans, Arial, sans-serif" font-size="13" fill="#4a4a4a" text-anchor="middle" font-weight="bold" xml:space="preserve">D</text><rect x="1200" y="655" width="1" height="16" fill="#a8a8a8" shape-rendering="crispEdges"/><rect x="1201" y="655" width="1" height="16" fill="#fdfdfd" shape-rendering="crispEdges"/><path d="M1214 656.500L1217.500 661H1215V665H1217.500L1214 669.500L1210.500 665H1213V661H1210.500Z" fill="#4a4a4a"/><path d="M1235 655.500L1238 659H1236V662H1239V660L1242.500 663L1239 666V664H1236V667H1238L1235 670.500L1232 667H1234V664H1231V666L1227.500 663L1231 660V662H1234V659H1232Z" fill="#4a4a4a"/><circle cx="1256" cy="663" r="5.200" fill="#f4f4f4" stroke="#666" stroke-width="1.200"/><path d="M1253 663H1259" stroke="#4a4a4a" stroke-width="1.800"/><circle cx="1277" cy="663" r="5.200" fill="#f4f4f4" stroke="#666" stroke-width="1.200"/><path d="M1274 663H1280M1277 660V666" stroke="#4a4a4a" stroke-width="1.800"/><rect x="1290" y="655" width="1" height="16" fill="#a8a8a8" shape-rendering="crispEdges"/><rect x="1291" y="655" width="1" height="16" fill="#fdfdfd" shape-rendering="crispEdges"/><path d="M1307 658.500V667.500L1301.500 663Z" fill="#cfcfcf"/><path d="M1322.500 658.500V667.500L1328 663Z" fill="#cfcfcf"/><rect x="1339.500" y="657.500" width="11" height="11" fill="#f8f8f8" stroke="#4a4a4a" stroke-width="1.200"/><path d="M1339.500 659H1350.500" stroke="#4a4a4a" stroke-width="2"/><path d="M1341.500 662.500H1343M1344.500 662.500H1349M1341.500 665.500H1343M1344.500 665.500H1349" stroke="#4a4a4a" stroke-width="1"/><rect x="1359" y="655" width="1" height="16" fill="#a8a8a8" shape-rendering="crispEdges"/><rect x="1360" y="655" width="1" height="16" fill="#fdfdfd" shape-rendering="crispEdges"/><rect x="35" y="673" width="1331" height="3" fill="#f2f2f2"/><rect x="0" y="676" width="1366" height="1" fill="#fdfdfd"/><rect x="0" y="677" width="1366" height="32" fill="#ececec"/><rect x="0" y="707" width="1366" height="1" fill="#a8a8a8"/><rect x="0" y="708" width="1366" height="1" fill="#fafafa"/><rect x="5" y="678" width="6" height="29" fill="url(#grip)"/><rect x="7" y="691" width="2" height="2" fill="#707070" shape-rendering="crispEdges"/><rect x="12" y="678" width="1" height="29" fill="#808080" shape-rendering="crispEdges"/><rect x="13" y="683" width="129" height="19" fill="#fff"/><rect x="13" y="683" width="129" height="1" fill="#7e7e7e" shape-rendering="crispEdges"/><rect x="13" y="684" width="129" height="1" fill="#a2a2a2" shape-rendering="crispEdges"/><rect x="13" y="683" width="1" height="19" fill="#7e7e7e" shape-rendering="crispEdges"/><rect x="14" y="684" width="1" height="17" fill="#a2a2a2" shape-rendering="crispEdges"/><rect x="13" y="701" width="129" height="1" fill="#f8f8f8" shape-rendering="crispEdges"/><rect x="141" y="683" width="1" height="19" fill="#f8f8f8" shape-rendering="crispEdges"/><rect x="124.500" y="685.500" width="15" height="15" fill="#f0f0f0" stroke="#8a8a8a" shape-rendering="crispEdges"/><rect x="125" y="686" width="14" height="1" fill="#fff" shape-rendering="crispEdges"/><rect x="125" y="686" width="1" height="14" fill="#fff" shape-rendering="crispEdges"/><rect x="138" y="686" width="1" height="14" fill="#6e6e6e" shape-rendering="crispEdges"/><rect x="125" y="699" width="14" height="1" fill="#6e6e6e" shape-rendering="crispEdges"/><path d="M128 691H135.5L131.75 695Z" fill="#000"/><rect x="29" y="693" width="81" height="1" fill="#000" shape-rendering="crispEdges"/><rect x="149" y="683" width="99" height="19" fill="#fff"/><rect x="149" y="683" width="99" height="1" fill="#7e7e7e" shape-rendering="crispEdges"/><rect x="149" y="684" width="99" height="1" fill="#a2a2a2" shape-rendering="crispEdges"/><rect x="149" y="683" width="1" height="19" fill="#7e7e7e" shape-rendering="crispEdges"/><rect x="150" y="684" width="1" height="17" fill="#a2a2a2" shape-rendering="crispEdges"/><rect x="149" y="701" width="99" height="1" fill="#f8f8f8" shape-rendering="crispEdges"/><rect x="247" y="683" width="1" height="19" fill="#f8f8f8" shape-rendering="crispEdges"/><rect x="230.500" y="685.500" width="15" height="15" fill="#f0f0f0" stroke="#8a8a8a" shape-rendering="crispEdges"/><rect x="231" y="686" width="14" height="1" fill="#fff" shape-rendering="crispEdges"/><rect x="231" y="686" width="1" height="14" fill="#fff" shape-rendering="crispEdges"/><rect x="244" y="686" width="1" height="14" fill="#6e6e6e" shape-rendering="crispEdges"/><rect x="231" y="699" width="14" height="1" fill="#6e6e6e" shape-rendering="crispEdges"/><path d="M234 691H241.5L237.75 695Z" fill="#000"/><rect x="161" y="693" width="59" height="1" fill="#000" shape-rendering="crispEdges"/><rect x="255" y="679" width="1" height="28" fill="#a8a8a8" shape-rendering="crispEdges"/><rect x="256" y="679" width="1" height="28" fill="#fdfdfd" shape-rendering="crispEdges"/><rect x="262" y="679" width="6" height="28" fill="url(#grip)"/><rect x="264" y="692" width="2" height="2" fill="#707070" shape-rendering="crispEdges"/><rect x="268" y="679" width="105" height="29" fill="#f4f4f4"/><rect x="272" y="683" width="10" height="10" fill="#00ff00"/><rect x="284" y="683" width="10" height="10" fill="#f0b848"/><rect x="296" y="683" width="10" height="10" fill="#ff0000"/><rect x="308" y="683" width="10" height="10" fill="#d260d2"/><rect x="320" y="683" width="10" height="10" fill="#ffc0cb"/><rect x="332" y="683" width="10" height="10" fill="#ffffff"/><rect x="331.5" y="682.500" width="11" height="11" fill="none" stroke="#c8c8c8" stroke-width="1"/><rect x="344" y="683" width="10" height="10" fill="#008c00"/><rect x="356" y="683" width="10" height="10" fill="#005000"/><rect x="272" y="695" width="10" height="10" fill="#000000"/><rect x="284" y="695" width="10" height="10" fill="#ff8000"/><rect x="296" y="695" width="10" height="10" fill="#e06010"/><rect x="308" y="695" width="10" height="10" fill="#7c7cc4"/><rect x="320" y="695" width="10" height="10" fill="#ffe4e1"/><rect x="332" y="695" width="10" height="10" fill="#00005c"/><rect x="344" y="695" width="10" height="10" fill="#00008c"/><rect x="356" y="695" width="10" height="10" fill="#ffd700"/><rect x="294.500" y="681.500" width="13" height="13" fill="none" stroke="#555" stroke-width="1" stroke-dasharray="1 1"/><path d="M368.500 692H374.500L371.500 695.500Z" fill="#000"/><rect x="384" y="679" width="1" height="28" fill="#a8a8a8" shape-rendering="crispEdges"/><rect x="385" y="679" width="1" height="28" fill="#fdfdfd" shape-rendering="crispEdges"/><rect x="392" y="679" width="6" height="28" fill="url(#grip)"/><rect x="394" y="692" width="2" height="2" fill="#707070" shape-rendering="crispEdges"/><rect x="404.500" y="688.500" width="15" height="12" rx="1" fill="#fff" stroke="#6a8cb0" stroke-width="1"/><rect x="405" y="689" width="6" height="1.500" fill="#9ab8d8"/><path d="M406 697L408.5 694.500L410 696" stroke="#e01010" stroke-width="1.100" fill="none"/><text x="411" y="699.5" font-family="Liberation Sans, Arial, sans-serif" font-size="11" fill="#000" xml:space="preserve">1</text><rect x="431.500" y="688.500" width="15" height="12" rx="1" fill="#fff" stroke="#6a8cb0" stroke-width="1"/><rect x="432" y="689" width="6" height="1.500" fill="#9ab8d8"/><path d="M433 697L435.5 694.500L437 696" stroke="#e01010" stroke-width="1.100" fill="none"/><text x="438" y="699.5" font-family="Liberation Sans, Arial, sans-serif" font-size="11" fill="#000" xml:space="preserve">2</text><rect x="458.500" y="688.500" width="15" height="12" rx="1" fill="#fff" stroke="#6a8cb0" stroke-width="1"/><rect x="459" y="689" width="6" height="1.500" fill="#9ab8d8"/><path d="M460 697L462.5 694.500L464 696" stroke="#e01010" stroke-width="1.100" fill="none"/><text x="465" y="699.5" font-family="Liberation Sans, Arial, sans-serif" font-size="11" fill="#000" xml:space="preserve">3</text><rect x="485.500" y="688.500" width="15" height="12" rx="1" fill="#fff" stroke="#6a8cb0" stroke-width="1"/><rect x="486" y="689" width="6" height="1.500" fill="#9ab8d8"/><path d="M487 697L489.5 694.500L491 696" stroke="#e01010" stroke-width="1.100" fill="none"/><text x="492" y="699.5" font-family="Liberation Sans, Arial, sans-serif" font-size="11" fill="#000" xml:space="preserve">4</text><rect x="512.500" y="688.500" width="15" height="12" rx="1" fill="#fff" stroke="#6a8cb0" stroke-width="1"/><rect x="513" y="689" width="6" height="1.500" fill="#9ab8d8"/><path d="M514 697L516.5 694.500L518 696" stroke="#e01010" stroke-width="1.100" fill="none"/><text x="519" y="699.5" font-family="Liberation Sans, Arial, sans-serif" font-size="11" fill="#000" xml:space="preserve">5</text><rect x="539.500" y="688.500" width="15" height="12" rx="1" fill="#fff" stroke="#6a8cb0" stroke-width="1"/><rect x="540" y="689" width="6" height="1.500" fill="#9ab8d8"/><path d="M541 697L543.5 694.500L545 696" stroke="#e01010" stroke-width="1.100" fill="none"/><text x="546" y="699.5" font-family="Liberation Sans, Arial, sans-serif" font-size="11" fill="#000" xml:space="preserve">6</text><rect x="567" y="679" width="1" height="28" fill="#a8a8a8" shape-rendering="crispEdges"/><rect x="568" y="679" width="1" height="28" fill="#fdfdfd" shape-rendering="crispEdges"/><rect x="0" y="709" width="1366" height="20" fill="#404040"/><text x="10" y="723.5" font-family="Liberation Sans, Arial, sans-serif" font-size="12" fill="#fff" textLength="101.5" lengthAdjust="spacingAndGlyphs" xml:space="preserve">For Help, press F1</text><text x="1095" y="723.5" font-family="Liberation Sans, Arial, sans-serif" font-size="12" fill="#fff" textLength="61" lengthAdjust="spacingAndGlyphs" xml:space="preserve">24/01/2020</text><text x="1252" y="723.5" font-family="Liberation Sans, Arial, sans-serif" font-size="12" fill="#fff" textLength="44" lengthAdjust="spacingAndGlyphs" xml:space="preserve">7.25028</text><rect x="1345" y="712" width="21" height="14" fill="#fff"/><text x="1355.5" y="724" font-family="Liberation Sans, Arial, sans-serif" font-size="13" fill="#108c10" text-anchor="middle" font-weight="bold" xml:space="preserve">$</text><defs><linearGradient id="tk1" x1="0" y1="0" x2="1" y2="0"><stop offset="0" stop-color="#c9902f"/><stop offset="0.6" stop-color="#c68a2c"/><stop offset="1" stop-color="#c17e2a"/></linearGradient><linearGradient id="tk3" x1="0" y1="0" x2="1" y2="0"><stop offset="0" stop-color="#c2a264"/><stop offset="0.5" stop-color="#c5a972"/><stop offset="1" stop-color="#c8aa6c"/></linearGradient><linearGradient id="tk4" x1="0" y1="0" x2="1" y2="0"><stop offset="0" stop-color="#d4a636"/><stop offset="1" stop-color="#dcae34"/></linearGradient><linearGradient id="tkt" x1="0" y1="0" x2="0" y2="1"><stop offset="0" stop-color="#000" stop-opacity="0.42"/><stop offset="1" stop-color="#000" stop-opacity="0"/></linearGradient></defs><rect x="0" y="729" width="1366" height="39" fill="url(#tk1)"/><path d="M672 729H758L766 768H660Z" fill="#b58c3a"/><path d="M758 729H1188L1222 768H766Z" fill="url(#tk3)"/><path d="M1188 729H1366V768H1222Z" fill="url(#tk4)"/><rect x="0" y="729" width="1366" height="2.5" fill="url(#tkt)"/><path d="M12 738.200L23.500 736.500V746.300H12ZM25 736.300L38.500 734.300V746.300H25ZM12 747.700H23.500V757.500L12 755.800ZM25 747.700H38.500V759.700L25 757.700Z" fill="#fff"/><path d="M66 740H76L78 737.500H95V758H66Z" fill="#f0d070" stroke="#c8a040" stroke-width="0.8"/><path d="M66 743H95V759H66Z" fill="#f8e090"/><rect x="69" y="736" width="4" height="2.500" fill="#38b038"/><rect x="77" y="737" width="4" height="2" fill="#e04040"/><rect x="85" y="738" width="4" height="2" fill="#4080e0"/><path d="M69 762V752Q69 749.500 72 749.500H90Q93 749.500 93 752V762H87V755H75V762Z" fill="#58b4e8" stroke="#2c84c0" stroke-width="0.8"/><path d="M128 736L146 732.500V763.500L128 760Z" fill="#d24726"/><rect x="146" y="737" width="12" height="22" fill="#fff" stroke="#d24726" stroke-width="1.500"/><circle cx="152" cy="743.500" r="3" fill="none" stroke="#d24726" stroke-width="1.400"/><path d="M148.500 750H155.500M148.500 753H155.500M148.500 756H155.500" stroke="#d24726" stroke-width="1.200"/><text x="137" y="753.5" font-family="Liberation Sans, Arial, sans-serif" font-size="15" fill="#fff" text-anchor="middle" font-weight="bold" xml:space="preserve">P</text><rect x="176" y="730" width="58" height="38" fill="#fff" fill-opacity="0.36"/><rect x="176.500" y="730.500" width="57" height="38" fill="none" stroke="#fff" stroke-opacity="0.45"/><rect x="189" y="732" width="32" height="32" rx="3.500" fill="#0c0c0c"/><rect x="188.500" y="731.500" width="33" height="33" rx="4" fill="none" stroke="#3a3a3a"/><path d="M196.500 760L198 748H201L200 760ZM201.800 760L204.500 741.500H208L205.600 760ZM207.300 760L211.500 735H215.500L211.500 760Z" fill="#f58a1e"/><rect x="238" y="730" width="58" height="38" fill="#fff" fill-opacity="0.16"/><rect x="238.500" y="730.500" width="57" height="38" fill="none" stroke="#fff" stroke-opacity="0.45"/><circle cx="267" cy="748" r="15" fill="#de4a3c"/><path d="M267 748L254 755.500A15 15 0 0 0 267 763L274.500 752Z" fill="#1ea362"/><path d="M267 748L280 740.500A15 15 0 0 1 267 763L274 752Z" fill="#fdd23c"/><path d="M254 740.500A15 15 0 0 1 280 740.500H267Z" fill="#de4a3c"/><path d="M254 740.500L260.500 752L254 755.500A15 15 0 0 1 254 740.500Z" fill="#1ea362"/><circle cx="267" cy="748" r="6.800" fill="#fff"/><circle cx="267" cy="748" r="5.300" fill="#4a8af4"/><rect x="300" y="730" width="58" height="38" fill="#fff" fill-opacity="0.16"/><rect x="300.500" y="730.500" width="57" height="38" fill="none" stroke="#fff" stroke-opacity="0.45"/><rect x="327" y="737" width="17" height="22" fill="#fff" stroke="#2b579a" stroke-width="1.200"/><path d="M331 741H342M331 744H342M331 747H342M331 750H342M331 753H342M331 756H342" stroke="#2b579a" stroke-width="1.300"/><path d="M313.500 736L331 732.500V763.500L313.500 760Z" fill="#2b579a"/><text x="322.5" y="753" font-family="Liberation Sans, Arial, sans-serif" font-size="13" fill="#fff" text-anchor="middle" font-weight="bold" xml:space="preserve">W</text><rect x="376" y="732" width="30" height="30.500" rx="3" fill="#1c6cf0"/><path d="M382.500 754V741.500H399.500V754H395.500V746H393V751H389V746H386.500V754Z" fill="#fff"/><rect x="442" y="733" width="21.500" height="29" rx="1.500" fill="#dcecf8" stroke="#6aa0cc" stroke-width="1"/><rect x="444.500" y="736" width="16.500" height="7" fill="#f4f8fc" stroke="#8ab0d0" stroke-width="0.700"/><text x="459.5" y="742.5" font-family="Liberation Sans, Arial, sans-serif" font-size="7" fill="#446" text-anchor="end" xml:space="preserve">0</text><rect x="444.5" y="745.5" width="3.2" height="3" fill="#7ab4e4"/><rect x="448.8" y="745.5" width="3.2" height="3" fill="#7ab4e4"/><rect x="453.1" y="745.5" width="3.2" height="3" fill="#7ab4e4"/><rect x="457.4" y="745.5" width="3.2" height="3" fill="#7ab4e4"/><rect x="444.5" y="749.5" width="3.2" height="3" fill="#7ab4e4"/><rect x="448.8" y="749.5" width="3.2" height="3" fill="#7ab4e4"/><rect x="453.1" y="749.5" width="3.2" height="3" fill="#7ab4e4"/><rect x="457.4" y="749.5" width="3.2" height="3" fill="#7ab4e4"/><rect x="444.5" y="753.5" width="3.2" height="3" fill="#7ab4e4"/><rect x="448.8" y="753.5" width="3.2" height="3" fill="#7ab4e4"/><rect x="453.1" y="753.5" width="3.2" height="3" fill="#7ab4e4"/><rect x="457.4" y="753.5" width="3.2" height="3" fill="#f0a030"/><rect x="444.5" y="757.5" width="3.2" height="3" fill="#7ab4e4"/><rect x="448.8" y="757.5" width="3.2" height="3" fill="#7ab4e4"/><rect x="453.1" y="757.5" width="3.2" height="3" fill="#7ab4e4"/><rect x="457.4" y="757.5" width="3.2" height="3" fill="#f0a030"/><text x="515" y="762.500" text-anchor="middle" font-family="Liberation Sans, Arial, sans-serif" font-weight="bold" font-size="53" fill="#3fb0ee" stroke="#2a8cd0" stroke-width="0.600">e</text><ellipse cx="514.500" cy="746" rx="18.500" ry="8" fill="none" stroke="#f6c228" stroke-width="2.400" transform="rotate(-32 514.500 746)" stroke-dasharray="46 16 40 100"/><rect x="548" y="730" width="53" height="38" fill="#fff" fill-opacity="0.16"/><rect x="548.500" y="730.500" width="52" height="38" fill="none" stroke="#fff" stroke-opacity="0.45"/><rect x="602" y="730" width="4" height="38" fill="#fff" fill-opacity="0.1"/><rect x="602.500" y="730.500" width="3" height="38" fill="none" stroke="#fff" stroke-opacity="0.45"/><rect x="572" y="737" width="17" height="22" fill="#fff" stroke="#217346" stroke-width="1.200"/><path d="M576 741H587M576 744.500H587M576 748H587M576 751.500H587M576 755H587M580 739V757M584 739V757" stroke="#217346" stroke-width="1.100"/><path d="M558.500 736L576 732.500V763.500L558.500 760Z" fill="#217346"/><text x="567.5" y="753" font-family="Liberation Sans, Arial, sans-serif" font-size="13" fill="#fff" text-anchor="middle" font-weight="bold" xml:space="preserve">X</text><circle cx="639" cy="747.500" r="14" fill="#2b4fb4"/><circle cx="642" cy="743" r="7" fill="#4a78d8" opacity="0.7"/><path d="M625 740Q628 733.500 636 733Q632 736 632.500 739Q637 737.500 640 740.500Q636 741 635.500 744Q639.500 745 640 748Q644 751 649 748.500Q650.500 746 650 742Q654 746 653.500 750Q652 760 641 762Q629 762.500 625 752Q623.500 745 625 740Z" fill="#f4801c"/><path d="M625 740Q628 733.500 636 733Q632 736 632.500 739Q629 742 629.500 747Q630 754 637 757Q630 757 626.500 752Q623.500 746 625 740Z" fill="#fdb82c"/><path d="M637 757Q645 759 650 752Q652.500 748 650 742Q654 746 653.500 750Q652 760 641 762Q633 762 629 757Q633 758 637 757Z" fill="#e2561a"/><rect x="686" y="733" width="30" height="29.5" fill="#e24a20"/><circle cx="701" cy="747.500" r="10" fill="none" stroke="#fff" stroke-width="2.200"/><text x="701" y="753.5" font-family="Liberation Sans, Arial, sans-serif" font-size="16" fill="#fff" text-anchor="middle" font-weight="bold" xml:space="preserve">?</text><rect x="763" y="740" width="15" height="15" fill="#fff" stroke="#0a6cd0" stroke-width="1.200"/><path d="M763.500 741L770.500 748L777.500 741" stroke="#0a6cd0" stroke-width="1.400" fill="none"/><path d="M748 736L765 732.500V763.500L748 760Z" fill="#0a6cd0"/><text x="756.5" y="753" font-family="Liberation Sans, Arial, sans-serif" font-size="13" fill="#fff" text-anchor="middle" font-weight="bold" xml:space="preserve">O</text><path d="M810 737Q810 733 815 733H832V757H810Z" fill="#c8d4c0" stroke="#7a8a72" stroke-width="1"/><path d="M813 741L838 739L840 760L815 762Z" fill="#f2f4e8" stroke="#9aa890" stroke-width="0.800"/><path d="M817 746.500L833 745L832 749L826 749.500L827 751L823 750L817.500 750.500Z" fill="#1c4c1c"/><path d="M820 754L836 752.500L835.500 756.500L824 757.500L823.500 759L821 757.500Z" fill="#1c4c1c"/><rect x="858" y="730" width="58" height="38" fill="#fff" fill-opacity="0.22"/><rect x="858.500" y="730.500" width="57" height="38" fill="none" stroke="#fff" stroke-opacity="0.45"/><rect x="871.500" y="733.500" width="31" height="30" rx="4" fill="none" stroke="#b4234a" stroke-width="1.300"/><text x="887" y="757.5" font-family="Liberation Sans, Arial, sans-serif" font-size="14" fill="#b4234a" text-anchor="middle" textLength="23" lengthAdjust="spacingAndGlyphs" xml:space="preserve">Pro</text><text x="887" y="743" font-family="Liberation Sans, Arial, sans-serif" font-size="3.5" fill="#5a1a2a" text-anchor="middle" textLength="12" lengthAdjust="spacingAndGlyphs" font-weight="bold" xml:space="preserve">eduBuddy</text><path d="M1079 752L1083 747.500L1087 752Z" fill="#fff"/><rect x="1102" y="740.500" width="6" height="9" rx="1" fill="#8a8a8a" stroke="#555" stroke-width="0.800"/><rect x="1103.500" y="738" width="3" height="3" fill="#aaa"/><path d="M1105 749.500V754" stroke="#555" stroke-width="1.500"/><circle cx="1109.500" cy="752.500" r="3.800" fill="#2cb02c"/><path d="M1107.500 752.500L1109 754L1111.500 751" stroke="#fff" stroke-width="1.100" fill="none"/><circle cx="1131" cy="748.500" r="7.200" fill="#dce8f4" stroke="#8aa4c0" stroke-width="1"/><path d="M1125 747Q1128 742 1134 743.500Q1137 745 1136 749Q1133 746 1130 747.500Q1128 749 1129 752Q1125 751 1125 747Z" fill="#2a7ad0"/><path d="M1148 746H1151L1155 742.500V755.500L1151 752H1148Z" fill="#fff" stroke="#888" stroke-width="0.500"/><path d="M1157.500 745.500Q1159.500 749 1157.500 752.500M1160 743.500Q1163 749 1160 754.500" stroke="#fff" stroke-width="1.200" fill="none"/><rect x="1168" y="734" width="1" height="30" fill="#fff" fill-opacity="0.35"/><rect x="1190" y="734" width="1" height="30" fill="#fff" fill-opacity="0.35"/><path d="M1174.500 742V757" stroke="#fff" stroke-width="1.600"/><path d="M1175.500 742.500Q1179 741 1181.500 743Q1184 745 1187 743.500V750Q1184 751.500 1181.500 749.500Q1179 748 1175.500 749Z" fill="#fff" stroke="#555" stroke-width="0.500"/><rect x="1196" y="753.5" width="2.2" height="2.5" fill="#fff"/><rect x="1199" y="751.1" width="2.2" height="4.9" fill="#fff"/><rect x="1202" y="748.7" width="2.2" height="7.3" fill="#fff"/><rect x="1205" y="746.3" width="2.2" height="9.7" fill="#fff"/><rect x="1208" y="743.9" width="2.2" height="12.1" fill="#fff"/><rect x="1226.500" y="743.500" width="7" height="12" rx="0.800" fill="none" stroke="#fff" stroke-width="1.400"/><rect x="1228.500" y="741.500" width="3" height="2" fill="#fff"/><path d="M1220 742V746M1223 742V746M1219 746H1224V749.500H1219ZM1221.500 749.500V756" stroke="#fff" stroke-width="1.200" fill="none"/><text x="1249" y="753" font-family="Liberation Sans, Arial, sans-serif" font-size="12" fill="#fff" textLength="23" lengthAdjust="spacingAndGlyphs" xml:space="preserve">POR</text><text x="1305" y="744.5" font-family="Liberation Sans, Arial, sans-serif" font-size="12" fill="#fff" textLength="27" lengthAdjust="spacingAndGlyphs" xml:space="preserve">19:02</text><text x="1288.5" y="761.5" font-family="Liberation Sans, Arial, sans-serif" font-size="12" fill="#fff" textLength="58.5" lengthAdjust="spacingAndGlyphs" xml:space="preserve">07/05/2020</text></svg></body></html>
